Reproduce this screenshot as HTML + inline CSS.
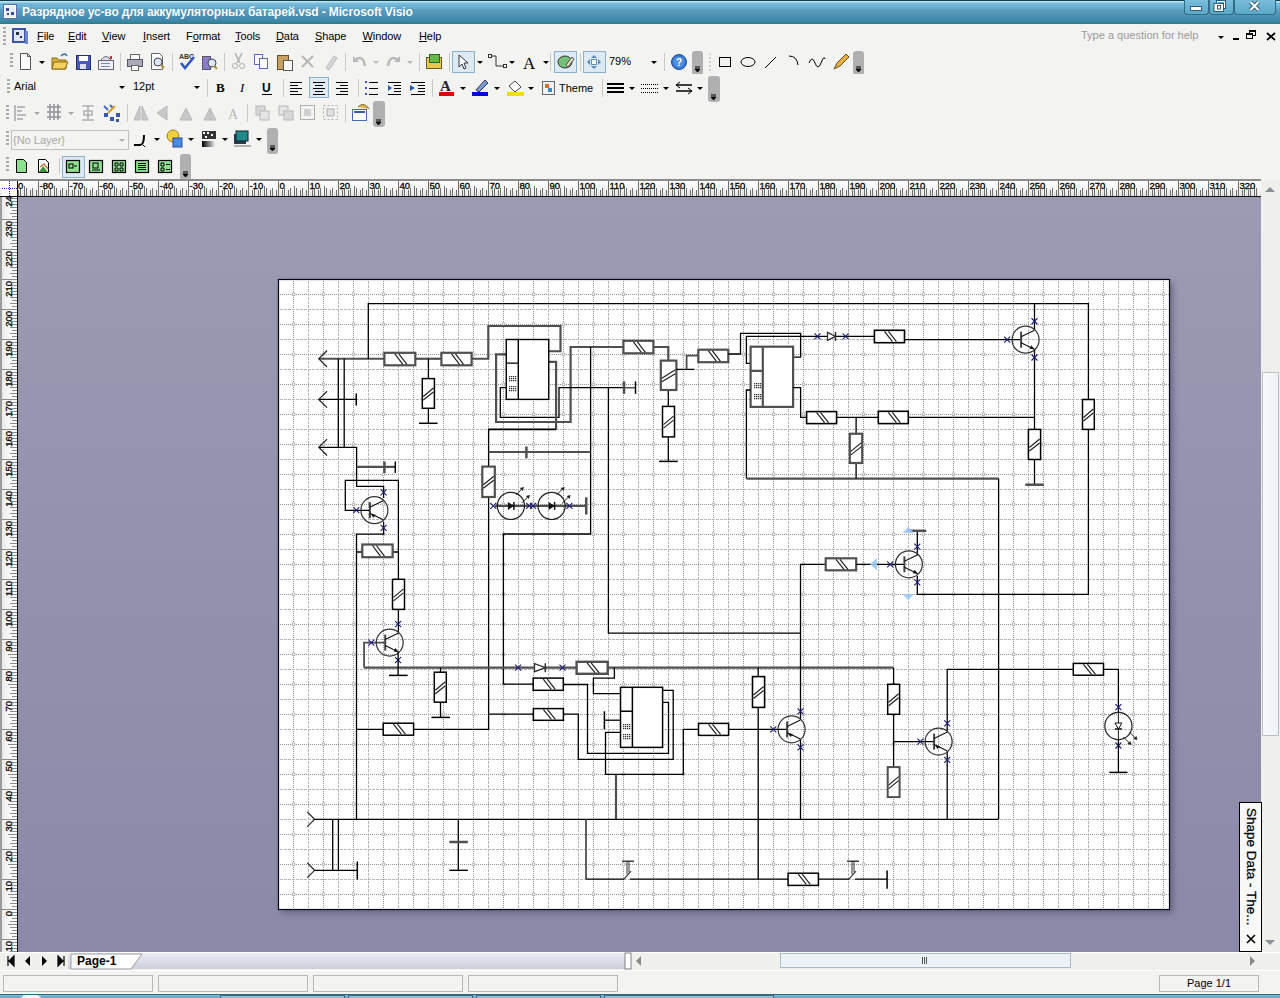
<!DOCTYPE html>
<html><head><meta charset="utf-8">
<style>
*{box-sizing:border-box}
html,body{margin:0;padding:0;width:1280px;height:998px;overflow:hidden;background:#f3f3f1;font-family:"Liberation Sans",sans-serif;}
.a{position:absolute}
#title{left:0;top:0;width:1280px;height:24px;background:linear-gradient(#123c46 0,#123c46 1px,#b4e6f6 1px,#b4e6f6 2px,#80bcd6 3px,#6cb6da 5px,#66acd0 8px,#5a9cbc 10px,#5296b6 14px,#4a8eb4 17px,#4288b0 20px,#348898 22px,#2f7888 24px);}
#title .t{left:22px;top:5px;color:#fff;font-weight:bold;font-size:12px;white-space:nowrap;letter-spacing:-0.13px;text-shadow:0 0 1px #3a7a95}
.wbtn{top:0;height:15px;border:1px solid #2f6c86;border-top:none;border-radius:0 0 4px 4px;background:linear-gradient(#79bedb,#5aa8c8)}
#menubar{left:0;top:24px;width:1280px;height:24px;background:#f3f3f1}
.mi{top:5.5px;font-size:11px;letter-spacing:-0.1px;color:#000;white-space:nowrap}
.mi u{text-decoration:underline}
.grip{width:3px;background:repeating-linear-gradient(#a9a9a9 0,#a9a9a9 2px,transparent 2px,transparent 4px)}
.sep{width:1px;height:18px;background:#c5c5c5}
.dd{width:0;height:0;border-left:3px solid transparent;border-right:3px solid transparent;border-top:3px solid #000}
.hnd{width:12px;border-radius:3px;background:linear-gradient(90deg,#c8c8c8,#a8a8a8)}
.hnd:after{content:"";position:absolute;left:3px;bottom:5px;width:6px;height:4px;border-top:1px solid #000;background:linear-gradient(#000 0,#000 0) no-repeat}
.sel{border:1px solid #8cb2cc;background:#dde9f3}
#ruler{left:0;top:179px;width:1261px;height:18px;background:linear-gradient(#fff,#f2f2f2 60%,#e4e4e4);border-top:2px solid #8a8a8a;border-bottom:1px solid #111}
#lruler{left:0;top:197px;width:18px;height:755px;background:linear-gradient(90deg,#e8e8e8,#fafafa);border-left:2px solid #9a9a9a;border-right:1px solid #111}
#canvas{left:18px;top:197px;width:1243px;height:755px;background:linear-gradient(#9b9bb3,#8a89a8)}
#vscroll{left:1261px;top:180px;width:19px;height:772px;background:#efefec}
#tabbar{left:0;top:952px;width:1280px;height:18px;background:#f0f0ee}
#status{left:0;top:970px;width:1280px;height:28px;background:#f3f3f1}
.sbox{top:5px;height:17px;border:1px solid #b9b9b5;background:#f3f3f1}
</style></head><body>
<div id="title" class="a">
 <svg class="a" style="left:3px;top:4px" width="15" height="15" viewBox="0 0 15 15"><rect x="0.5" y="0.5" width="13" height="14" fill="#fff" stroke="#5a6fb0"/><rect x="2" y="2" width="10" height="11" fill="#e8ecf8"/><rect x="3" y="4" width="3" height="3" fill="#3a4f98"/><rect x="8" y="8" width="3" height="3" fill="#3a4f98"/><rect x="4" y="9" width="2" height="2" fill="#3a4f98"/></svg>
 <div class="a t">Разрядное ус-во для аккумуляторных батарей.vsd - Microsoft Visio</div>
 <div class="a wbtn" style="left:1184px;width:25px"></div>
 <div class="a wbtn" style="left:1209px;width:25px"></div>
 <div class="a wbtn" style="left:1234px;width:42px"></div>
 <svg class="a" style="left:1184px;top:0" width="96" height="16" viewBox="1184 0 96 16">
  <rect x="1190.5" y="6.5" width="11" height="4" fill="#fff" stroke="#2f5a70"/>
  <rect x="1216.5" y="0.5" width="9" height="8" fill="#fff" stroke="#2f5a70"/><rect x="1218" y="2" width="6" height="5" fill="#5aa6c6"/>
  <rect x="1214" y="3.5" width="9.5" height="8" fill="#fff" stroke="#2f5a70"/><rect x="1217.5" y="5.5" width="3" height="3.5" fill="#fff" stroke="#2f5a70"/>
  <path d="M1250.5 2L1258.5 10M1258.5 2L1250.5 10" stroke="#2f5a70" stroke-width="4"/>
  <path d="M1250.5 2L1258.5 10M1258.5 2L1250.5 10" stroke="#fff" stroke-width="2.2"/>
 </svg>
</div>
<div id="menubar" class="a">
 <div class="a grip" style="left:3px;top:3px;height:18px"></div>
 <svg class="a" style="left:11px;top:3px" width="18" height="18" viewBox="0 0 18 18"><rect x="1" y="1" width="14" height="15" fill="#3a56a8"/><rect x="3" y="3" width="10" height="11" fill="#dfe6f6"/><rect x="5" y="5" width="3" height="3" fill="#234"/><rect x="9" y="9" width="2" height="2" fill="#234"/><rect x="14" y="4" width="3" height="13" fill="#6f86c8"/></svg>
 <div class="a mi" style="left:37px"><u>F</u>ile</div>
 <div class="a mi" style="left:68px"><u>E</u>dit</div>
 <div class="a mi" style="left:102px"><u>V</u>iew</div>
 <div class="a mi" style="left:143px"><u>I</u>nsert</div>
 <div class="a mi" style="left:186px">F<u>o</u>rmat</div>
 <div class="a mi" style="left:235px"><u>T</u>ools</div>
 <div class="a mi" style="left:276px"><u>D</u>ata</div>
 <div class="a mi" style="left:315px"><u>S</u>hape</div>
 <div class="a mi" style="left:362.5px"><u>W</u>indow</div>
 <div class="a mi" style="left:419px"><u>H</u>elp</div>
 <div class="a" style="left:1081px;top:5px;font-size:11px;color:#9a9a9a;white-space:nowrap">Type a question for help</div>
 <div class="a dd" style="left:1218px;top:12px"></div>
 <div class="a" style="left:1233px;top:14px;width:6px;height:2px;background:#000"></div>
 <div class="a" style="left:1249px;top:6px;width:7px;height:6px;border:1px solid #000;border-top-width:2px"></div>
 <div class="a" style="left:1246px;top:9px;width:7px;height:6px;border:1px solid #000;border-top-width:2px;background:#f3f3f1"></div>
 <svg class="a" style="left:1266px;top:8px" width="10" height="9" viewBox="0 0 10 9"><path d="M1 1L9 8M9 1L1 8" stroke="#000" stroke-width="1.8"/></svg>
</div>
<!-- toolbar row1 -->
<div class="a grip" style="left:10px;top:53px;height:16px"></div>
<svg class="a" style="left:0;top:50px" width="870" height="24" viewBox="0 0 870 24">
 <!-- new -->
 <path d="M20.5 3.5h7l3 3v13h-10z" fill="#fff" stroke="#555"/><path d="M27.5 3.5v3h3" fill="none" stroke="#555"/>
 <path d="M39 11h6l-3 3z" fill="#000"/>
 <!-- open -->
 <path d="M52 8h5l1 2h8v9H52z" fill="#d8b040" stroke="#8a6a10"/><path d="M54 12h14l-3 7H52z" fill="#f4d060" stroke="#8a6a10"/><path d="M61 6q4-4 6 0" fill="none" stroke="#3a6ab0" stroke-width="1.5"/>
 <!-- save -->
 <rect x="76.5" y="5.5" width="14" height="14" fill="#4a5ab8" stroke="#23306a"/><rect x="79" y="6" width="9" height="5" fill="#fff"/><rect x="80" y="14" width="6" height="5" fill="#dde"/>
 <!-- mail -->
 <rect x="98.5" y="10.5" width="15" height="9" fill="#eef" stroke="#667"/><path d="M101 10 q5-7 10 0" fill="#dde" stroke="#667"/><rect x="101" y="13" width="9" height="1" fill="#7a8ab8"/><rect x="101" y="16" width="9" height="1" fill="#7a8ab8"/><rect x="110" y="6" width="2" height="3" fill="#c33"/>
 <rect x="120" y="3" width="1" height="18" fill="#c8c8c8"/>
 <!-- print -->
 <rect x="130.5" y="4.5" width="9" height="5" fill="#fff" stroke="#666"/><rect x="127.5" y="9.5" width="15" height="7" fill="#aab" stroke="#556"/><rect x="131.5" y="15.5" width="7" height="5" fill="#fff" stroke="#666"/>
 <!-- preview -->
 <path d="M151.5 3.5h8l3 3v13h-11z" fill="#fff" stroke="#666"/><circle cx="158" cy="12" r="4" fill="#dde8f0" stroke="#445"/><path d="M161 15l3 3" stroke="#a8902a" stroke-width="2"/>
 <rect x="172" y="3" width="1" height="18" fill="#c8c8c8"/>
 <!-- spelling -->
 <text x="179" y="9" font-size="7" font-weight="bold" fill="#333" font-family="Liberation Sans">ABC</text><path d="M181 13l4 5 9-11" fill="none" stroke="#2a56c0" stroke-width="2.5"/>
 <!-- research -->
 <rect x="202.5" y="6.5" width="8" height="13" fill="#8a7ac8" stroke="#556"/><circle cx="212" cy="13" r="4" fill="#dde8f0" stroke="#445"/><path d="M214 16l3 3" stroke="#a8902a" stroke-width="2"/>
 <rect x="224" y="3" width="1" height="18" fill="#c8c8c8"/>
 <!-- cut gray -->
 <path d="M235 3l5 10M242 3l-5 10" stroke="#b0b0b0" stroke-width="1.5"/><circle cx="235" cy="16" r="2.5" fill="none" stroke="#b0b0b0"/><circle cx="242" cy="16" r="2.5" fill="none" stroke="#b0b0b0"/>
 <!-- copy -->
 <rect x="254.5" y="4.5" width="8" height="10" fill="#fff" stroke="#5a6ab0"/><rect x="259.5" y="8.5" width="8" height="10" fill="#fff" stroke="#5a6ab0"/>
 <!-- paste -->
 <rect x="277.5" y="5.5" width="11" height="14" fill="#c8a060" stroke="#6a5020"/><rect x="283.5" y="10.5" width="9" height="10" fill="#fff" stroke="#555"/>
 <!-- delete gray -->
 <path d="M302 6l11 11M313 6l-11 11" stroke="#b8b8b8" stroke-width="2"/>
 <!-- painter gray -->
 <path d="M326 18l8-12 3 2-8 12z" fill="#d8d8d8" stroke="#b8b8b8"/>
 <rect x="345" y="3" width="1" height="18" fill="#c8c8c8"/>
 <!-- undo redo gray -->
 <path d="M355 10q8-6 10 6" fill="none" stroke="#b8b8b8" stroke-width="2.5"/><path d="M353 6v6h6z" fill="#b8b8b8"/>
 <path d="M373 11h6l-3 3z" fill="#b8b8b8"/>
 <path d="M398 10q-8-6-10 6" fill="none" stroke="#b8b8b8" stroke-width="2.5"/><path d="M400 6v6h-6z" fill="#b8b8b8"/>
 <path d="M407 11h6l-3 3z" fill="#b8b8b8"/>
 <rect x="419" y="3" width="1" height="18" fill="#c8c8c8"/>
 <!-- stencil -->
 <rect x="426.5" y="7.5" width="15" height="11" fill="#e8c850" stroke="#6a5a20"/><rect x="429.5" y="4.5" width="10" height="8" fill="#68b848" stroke="#2a6a20"/>
 <rect x="449" y="3" width="1" height="18" fill="#c8c8c8"/>
 <!-- pointer selected -->
 <rect x="452.5" y="1.5" width="22" height="21" fill="#dde9f3" stroke="#8cb2cc"/>
 <path d="M459 5v12l3-3 2 5 2-1-2-5h4z" fill="#fff" stroke="#333"/>
 <path d="M477 11h6l-3 3z" fill="#000"/>
 <!-- connector -->
 <path d="M491 6h5v10h7" fill="none" stroke="#333"/><rect x="488.5" y="4.5" width="3" height="3" fill="#fff" stroke="#333"/><rect x="503.5" y="14.5" width="3" height="3" fill="#fff" stroke="#333"/>
 <path d="M509 11h6l-3 3z" fill="#000"/>
 <!-- text A -->
 <text x="523" y="19" font-size="17" font-family="Liberation Serif" fill="#000">A</text>
 <path d="M543 11h6l-3 3z" fill="#000"/>
 <rect x="550" y="3" width="1" height="18" fill="#c8c8c8"/>
 <!-- shapes selected -->
 <rect x="554.5" y="1.5" width="22" height="21" fill="#dde9f3" stroke="#8cb2cc"/>
 <ellipse cx="565" cy="12" rx="7" ry="6" fill="#78c078" stroke="#333"/><path d="M566 15l6-8 2 2-6 8z" fill="#e8e0c0" stroke="#555"/>
 <rect x="580" y="3" width="1" height="18" fill="#c8c8c8"/>
 <!-- pan zoom selected -->
 <rect x="583.5" y="1.5" width="22" height="21" fill="#dde9f3" stroke="#8cb2cc"/>
 <path d="M594 5l3 3h-6zM594 19l3-3h-6zM587 12l3-3v6zM601 12l-3-3v6z" fill="#5a8ac8"/><rect x="591.5" y="9.5" width="5" height="5" fill="#fff" stroke="#5a8ac8"/>
 <text x="609" y="15" font-size="11" font-family="Liberation Sans" fill="#000">79%</text>
 <path d="M651 11h6l-3 3z" fill="#000"/>
 <rect x="664" y="3" width="1" height="18" fill="#c8c8c8"/>
 <circle cx="679" cy="12" r="7.5" fill="#3a78d0" stroke="#1a4a98"/><circle cx="679" cy="12" r="5.5" fill="#4a90e0"/><text x="676" y="16" font-size="10" font-weight="bold" fill="#fff" font-family="Liberation Sans">?</text>
 <rect x="692" y="1" width="11" height="24" rx="3" fill="#b0b0b0"/><path d="M695 17h5M695 19h5l-2.5 3z" stroke="#000" fill="#000" stroke-width="1"/>
 <path d="M710 3v18" stroke="#b0b0b0" stroke-dasharray="2 2"/>
 <rect x="719.5" y="7.5" width="11" height="9" fill="none" stroke="#000"/>
 <ellipse cx="748" cy="12" rx="7" ry="4.5" fill="none" stroke="#000"/>
 <path d="M765 18l11-11" stroke="#000"/>
 <path d="M789 6q8 0 9 9" fill="none" stroke="#000"/>
 <path d="M809 13q3-8 6 0t6 0 4-4" fill="none" stroke="#000"/>
 <path d="M834 19l3-6 9-9 3 3-9 9z" fill="#e8b040" stroke="#6a4a10"/>
 <rect x="853" y="1" width="11" height="24" rx="3" fill="#b0b0b0"/><path d="M856 17h5M856 19h5l-2.5 3z" stroke="#000" fill="#000" stroke-width="1"/>
</svg>
<!-- toolbar row2 -->
<div class="a grip" style="left:7px;top:79px;height:16px"></div>
<div class="a" style="left:14px;top:80px;font-size:11px">Arial</div>
<svg class="a" style="left:0;top:76px" width="730" height="26" viewBox="0 0 730 26">
 <path d="M119 10h6l-3 3z" fill="#000"/>
 <path d="M194 10h6l-3 3z" fill="#000"/>
 <rect x="207" y="3" width="1" height="18" fill="#c8c8c8"/>
 <text x="216" y="16" font-size="13" font-weight="bold" font-family="Liberation Serif">B</text>
 <text x="240" y="16" font-size="13" font-style="italic" font-family="Liberation Serif">I</text>
 <text x="262" y="16" font-size="12" font-weight="bold" font-family="Liberation Sans">U</text><rect x="262" y="18" width="10" height="1" fill="#000"/>
 <rect x="283" y="3" width="1" height="18" fill="#c8c8c8"/>
 <path d="M290 6.5h12M290 9.5h8M290 12.5h12M290 15.5h8M290 18.5h12" stroke="#000"/>
 <rect x="309.5" y="1.5" width="19" height="20" fill="#dde9f3" stroke="#8cb2cc"/>
 <path d="M313 6.5h12M315 9.5h8M313 12.5h12M315 15.5h8M313 18.5h12" stroke="#000"/>
 <path d="M336 6.5h12M340 9.5h8M336 12.5h12M340 15.5h8M336 18.5h12" stroke="#000"/>
 <rect x="358" y="3" width="1" height="18" fill="#c8c8c8"/>
 <path d="M369 6.5h9M369 12.5h9M369 18.5h9" stroke="#000"/><path d="M365 6h2M365 12h2M365 18h2" stroke="#3a5ab0" stroke-width="2"/>
 <path d="M388 6.5h13M394 9.5h7M394 12.5h7M394 15.5h7M388 18.5h13" stroke="#000"/><path d="M392 12l-4-3v6z" fill="#2a5ab8"/>
 <path d="M411 6.5h14M418 9.5h7M418 12.5h7M418 15.5h7M411 18.5h14" stroke="#000"/><path d="M410 9l5 3-5 3z" fill="#2a5ab8"/>
 <rect x="432" y="3" width="1" height="18" fill="#c8c8c8"/>
 <text x="440" y="15" font-size="15" font-weight="bold" font-family="Liberation Serif" fill="#223">A</text><rect x="439" y="16" width="15" height="4" fill="#e00000"/>
 <path d="M460 11h6l-3 3z" fill="#000"/>
 <path d="M476 14l9-10 3 3-9 9z" fill="#7a9ad8" stroke="#334"/><rect x="472" y="16" width="16" height="4" fill="#0000e0"/>
 <path d="M494 11h6l-3 3z" fill="#000"/>
 <path d="M509 10l6-5 6 6-6 5z" fill="#fff" stroke="#444"/><rect x="507" y="16" width="17" height="4" fill="#f0e000"/>
 <path d="M528 11h6l-3 3z" fill="#000"/>
 <rect x="542.5" y="5.5" width="12" height="13" fill="#f4f4f8" stroke="#667"/><rect x="545" y="8" width="4" height="4" fill="#e86a20"/><rect x="548" y="12" width="4" height="4" fill="#3a8ad0"/>
 <text x="559" y="16" font-size="11" font-family="Liberation Sans">Theme</text>
 <rect x="602" y="3" width="1" height="18" fill="#c8c8c8"/>
 <path d="M607 8h17M607 12h17M607 16h17" stroke="#000" stroke-width="2"/>
 <path d="M629 11h6l-3 3z" fill="#000"/>
 <path d="M641 8.5h17M641 12.5h17M641 16.5h17" stroke="#000" stroke-dasharray="1 1"/>
 <path d="M663 11h6l-3 3z" fill="#000"/>
 <path d="M676 9h16M676 15h16" stroke="#000" stroke-width="1.5"/><path d="M680 6l-4 3 4 3M688 12l4 3-4 3" fill="none" stroke="#000"/>
 <path d="M697 11h6l-3 3z" fill="#000"/>
 <rect x="708" y="0" width="12" height="26" rx="3" fill="#b0b0b0"/><path d="M711 19h5M711 21h5l-2.5 3z" stroke="#000" fill="#000" stroke-width="1"/>
</svg>
<div class="a" style="left:133px;top:80px;font-size:11px">12pt</div>
<!-- toolbar row3 -->
<div class="a grip" style="left:6px;top:105px;height:16px"></div>
<svg class="a" style="left:0;top:101px" width="400" height="78" viewBox="0 0 400 78">
 <!-- row3 (y offset 0, center 12) -->
 <path d="M15 4v16M17 6h8M17 10h5M17 14h9M17 18h6" stroke="#a8a8a8" stroke-width="1.5"/>
 <path d="M34 11h6l-3 3z" fill="#a8a8a8"/>
 <path d="M47 6h14M47 11h14M47 16h14M50 3v16M54 3v16M58 3v16" stroke="#909098" stroke-width="1.5"/>
 <path d="M68 11h6l-3 3z" fill="#a8a8a8"/>
 <path d="M82 5h12M82 19h12M88 5v14M84 10h8v4h-8z" fill="none" stroke="#b0b0b0" stroke-width="1.5"/>
 <path d="M104 5l4 4M110 4l3 3" stroke="#4a6ab8" stroke-width="2"/><path d="M108 12l7-7" stroke="#d8a020" stroke-width="2"/><rect x="104" y="12" width="4" height="4" fill="#3a56a8"/><rect x="110" y="16" width="4" height="4" fill="#3a56a8"/><rect x="116" y="12" width="4" height="4" fill="#3a56a8"/><rect x="116" y="18" width="3" height="3" fill="#3a56a8"/>
 <rect x="127" y="3" width="1" height="18" fill="#c8c8c8"/>
 <path d="M140 5v14h-6zM142 5v14h6z" fill="#c8c8c8" stroke="#b8b8b8"/>
 <path d="M157 12l10-7v14z" fill="#c8c8c8" stroke="#b8b8b8"/>
 <path d="M180 19l6-12 6 12z" fill="#c8c8c8" stroke="#b8b8b8"/>
 <path d="M204 19l6-12 6 12zM210 7v12" fill="#c8c8c8" stroke="#b8b8b8"/>
 <text x="228" y="18" font-size="14" font-family="Liberation Serif" fill="#b8b8b8">A</text>
 <rect x="247" y="3" width="1" height="18" fill="#c8c8c8"/>
 <rect x="256" y="5" width="9" height="9" fill="#d8d8d8" stroke="#b8b8b8"/><rect x="260" y="10" width="9" height="9" fill="#e4e4e4" stroke="#b8b8b8"/>
 <rect x="279" y="5" width="9" height="9" fill="#e4e4e4" stroke="#b8b8b8"/><rect x="284" y="10" width="9" height="9" fill="#d8d8d8" stroke="#b8b8b8"/>
 <rect x="300.5" y="4.5" width="14" height="14" fill="none" stroke="#b0b0b0"/><rect x="304" y="8" width="7" height="7" fill="#d0d0d0"/>
 <rect x="323.5" y="4.5" width="14" height="14" fill="none" stroke="#b0b0b0" stroke-dasharray="2 2"/><rect x="327" y="8" width="7" height="7" fill="#e0e0e0" stroke="#b0b0b0"/>
 <rect x="345" y="3" width="1" height="18" fill="#c8c8c8"/>
 <rect x="352.5" y="8.5" width="14" height="11" fill="#fff" stroke="#4a6ab0"/><rect x="354" y="10" width="11" height="2" fill="#3a5ab0"/><path d="M358 6q6-6 11 2" fill="#e8b040" stroke="#8a6a10"/>
 <rect x="373" y="0" width="12" height="26" rx="3" fill="#b0b0b0"/><path d="M376 19h5M376 21h5l-2.5 3z" stroke="#000" fill="#000" stroke-width="1"/>
 <!-- row4 (y offset 26) -->
 <rect x="11.5" y="29.5" width="117" height="19" fill="#f4f4f2" stroke="#c0c0bc"/>
 <text x="13" y="43" font-size="11" font-family="Liberation Sans" fill="#a8a8a8">{No Layer}</text>
 <path d="M119 38h6l-3 3z" fill="#b0b0b0"/>
 <path d="M134 44h6q4 0 4-10" fill="none" stroke="#000" stroke-width="2"/><path d="M143 44l2 2" stroke="#000"/>
 <path d="M154 37h6l-3 3z" fill="#000"/>
 <circle cx="173" cy="35" r="6" fill="#f0d040" stroke="#a08020"/><rect x="173" y="37" width="9" height="9" fill="#4a8ae0" stroke="#2a4a98"/>
 <path d="M188 37h6l-3 3z" fill="#000"/>
 <rect x="202" y="30" width="14" height="8" fill="#333"/><path d="M203 31h2v2h-2zM207 31h2v2h-2zM211 33h2v2h-2zM205 35h2v2h-2z" fill="#fff"/><rect x="202" y="40" width="14" height="6" fill="url(#gr)"/>
 <defs><linearGradient id="gr"><stop offset="0" stop-color="#000"/><stop offset="1" stop-color="#fff"/></linearGradient></defs>
 <path d="M222 37h6l-3 3z" fill="#000"/>
 <rect x="234" y="33" width="12" height="10" fill="#2a3a4a"/><rect x="236" y="30" width="12" height="10" fill="#1f8a8a" stroke="#123"/><rect x="234" y="44" width="17" height="2" fill="#b0b0b0"/>
 <path d="M256 37h6l-3 3z" fill="#000"/>
 <rect x="267" y="27" width="11" height="26" rx="3" fill="#b0b0b0"/><path d="M270 45h5M270 47h5l-2.5 3z" stroke="#000" fill="#000" stroke-width="1"/>
 <g transform="translate(0,2)"><!-- row5 (y offset 52) -->
 <path d="M16.5 56.5h7l3 3v10h-10z" fill="#8ee08e" stroke="#000"/>
 <path d="M38.5 56.5h7l3 3v10h-10z" fill="#fff" stroke="#000"/><path d="M39 69l4-6 5 6z" fill="#3a9a3a"/><path d="M40 64l4-3 4 5" fill="none" stroke="#c87a30" stroke-width="1.5"/>
 <rect x="59" y="55" width="1" height="16" fill="#c8c8c8"/>
 <rect x="62.5" y="53.5" width="22" height="21" fill="#dde9f3" stroke="#8cb2cc"/>
 <rect x="66.5" y="57.5" width="13" height="12" fill="#8ee08e" stroke="#000" stroke-width="1.2"/><rect x="69" y="61" width="4" height="4" fill="none" stroke="#000"/><path d="M74 63h3" stroke="#000"/>
 <rect x="89.5" y="57.5" width="13" height="12" fill="#8ee08e" stroke="#000" stroke-width="1.2"/><rect x="93" y="60" width="5" height="5" fill="none" stroke="#000"/><path d="M92 67h8" stroke="#000"/>
 <rect x="112.5" y="57.5" width="13" height="12" fill="#8ee08e" stroke="#000" stroke-width="1.2"/><path d="M115 60h3v3h-3zM120 60h3v3h-3zM115 65h3v3h-3zM120 65h3v3h-3z" fill="none" stroke="#000"/>
 <rect x="135.5" y="57.5" width="13" height="12" fill="#8ee08e" stroke="#000" stroke-width="1.2"/><path d="M138 60.5h8M138 62.5h8M138 64.5h8M138 66.5h8" stroke="#000"/>
 <rect x="158.5" y="57.5" width="13" height="12" fill="#8ee08e" stroke="#000" stroke-width="1.2"/><path d="M161 60h3v3h-3zM161 65h3v3h-3zM166 61.5h4M166 66.5h4" fill="none" stroke="#000"/>
 </g><rect x="180" y="53" width="11" height="26" rx="3" fill="#b0b0b0"/><path d="M183 71h5M183 73h5l-2.5 3z" stroke="#000" fill="#000" stroke-width="1"/>
</svg>
<div class="a grip" style="left:6px;top:131px;height:16px"></div>
<div class="a grip" style="left:6px;top:157px;height:16px"></div>
<div id="canvas" class="a"></div>
<svg class="a" style="left:0;top:179px" width="1261" height="18" viewBox="0 179 1261 18">
<defs><linearGradient id="rg" x1="0" y1="0" x2="0" y2="1"><stop offset="0" stop-color="#ffffff"/><stop offset="0.6" stop-color="#f4f4f4"/><stop offset="1" stop-color="#e2e2e2"/></linearGradient></defs>
<rect x="0" y="179" width="1261" height="18" fill="url(#rg)"/>
<rect x="0" y="179" width="1261" height="2" fill="#8c8c8c"/>
<rect x="0" y="196" width="1261" height="1" fill="#101010"/>
<path d="M2.5 188V196M6.5 190V196M8.5 181V196M12.5 190V196M14.5 188V196M18.5 190V196M20.5 188V196M24.5 186V196M26.5 188V196M30.5 190V196M32.5 188V196M36.5 190V196M38.5 181V196M42.5 190V196M44.5 188V196M48.5 190V196M50.5 188V196M54.5 186V196M56.5 188V196M60.5 190V196M62.5 188V196M66.5 190V196M68.5 181V196M72.5 190V196M74.5 188V196M78.5 190V196M80.5 188V196M84.5 186V196M86.5 188V196M90.5 190V196M92.5 188V196M96.5 190V196M98.5 181V196M102.5 190V196M104.5 188V196M108.5 190V196M110.5 188V196M114.5 186V196M116.5 188V196M120.5 190V196M122.5 188V196M126.5 190V196M128.5 181V196M132.5 190V196M134.5 188V196M138.5 190V196M140.5 188V196M144.5 186V196M146.5 188V196M150.5 190V196M152.5 188V196M156.5 190V196M158.5 181V196M162.5 190V196M164.5 188V196M168.5 190V196M170.5 188V196M174.5 186V196M176.5 188V196M180.5 190V196M182.5 188V196M186.5 190V196M188.5 181V196M192.5 190V196M194.5 188V196M198.5 190V196M200.5 188V196M204.5 186V196M206.5 188V196M210.5 190V196M212.5 188V196M216.5 190V196M218.5 181V196M222.5 190V196M224.5 188V196M228.5 190V196M230.5 188V196M234.5 186V196M236.5 188V196M240.5 190V196M242.5 188V196M246.5 190V196M248.5 181V196M252.5 190V196M254.5 188V196M258.5 190V196M260.5 188V196M264.5 186V196M266.5 188V196M270.5 190V196M272.5 188V196M276.5 190V196M278.5 181V196M282.5 190V196M284.5 188V196M288.5 190V196M290.5 188V196M294.5 186V196M296.5 188V196M300.5 190V196M302.5 188V196M306.5 190V196M308.5 181V196M312.5 190V196M314.5 188V196M318.5 190V196M320.5 188V196M324.5 186V196M326.5 188V196M330.5 190V196M332.5 188V196M336.5 190V196M338.5 181V196M342.5 190V196M344.5 188V196M348.5 190V196M350.5 188V196M354.5 186V196M356.5 188V196M360.5 190V196M362.5 188V196M366.5 190V196M368.5 181V196M372.5 190V196M374.5 188V196M378.5 190V196M380.5 188V196M384.5 186V196M386.5 188V196M390.5 190V196M392.5 188V196M396.5 190V196M398.5 181V196M402.5 190V196M404.5 188V196M408.5 190V196M410.5 188V196M414.5 186V196M416.5 188V196M420.5 190V196M422.5 188V196M426.5 190V196M428.5 181V196M432.5 190V196M434.5 188V196M438.5 190V196M440.5 188V196M444.5 186V196M446.5 188V196M450.5 190V196M452.5 188V196M456.5 190V196M458.5 181V196M462.5 190V196M464.5 188V196M468.5 190V196M470.5 188V196M474.5 186V196M476.5 188V196M480.5 190V196M482.5 188V196M486.5 190V196M488.5 181V196M492.5 190V196M494.5 188V196M498.5 190V196M500.5 188V196M504.5 186V196M506.5 188V196M510.5 190V196M512.5 188V196M516.5 190V196M518.5 181V196M522.5 190V196M524.5 188V196M528.5 190V196M530.5 188V196M534.5 186V196M536.5 188V196M540.5 190V196M542.5 188V196M546.5 190V196M548.5 181V196M552.5 190V196M554.5 188V196M558.5 190V196M560.5 188V196M564.5 186V196M566.5 188V196M570.5 190V196M572.5 188V196M576.5 190V196M578.5 181V196M582.5 190V196M584.5 188V196M588.5 190V196M590.5 188V196M594.5 186V196M596.5 188V196M600.5 190V196M602.5 188V196M606.5 190V196M608.5 181V196M612.5 190V196M614.5 188V196M618.5 190V196M620.5 188V196M624.5 186V196M626.5 188V196M630.5 190V196M632.5 188V196M636.5 190V196M638.5 181V196M642.5 190V196M644.5 188V196M648.5 190V196M650.5 188V196M654.5 186V196M656.5 188V196M660.5 190V196M662.5 188V196M666.5 190V196M668.5 181V196M672.5 190V196M674.5 188V196M678.5 190V196M680.5 188V196M684.5 186V196M686.5 188V196M690.5 190V196M692.5 188V196M696.5 190V196M698.5 181V196M702.5 190V196M704.5 188V196M708.5 190V196M710.5 188V196M714.5 186V196M716.5 188V196M720.5 190V196M722.5 188V196M726.5 190V196M728.5 181V196M732.5 190V196M734.5 188V196M738.5 190V196M740.5 188V196M744.5 186V196M746.5 188V196M750.5 190V196M752.5 188V196M756.5 190V196M758.5 181V196M762.5 190V196M764.5 188V196M768.5 190V196M770.5 188V196M774.5 186V196M776.5 188V196M780.5 190V196M782.5 188V196M786.5 190V196M788.5 181V196M792.5 190V196M794.5 188V196M798.5 190V196M800.5 188V196M804.5 186V196M806.5 188V196M810.5 190V196M812.5 188V196M816.5 190V196M818.5 181V196M822.5 190V196M824.5 188V196M828.5 190V196M830.5 188V196M834.5 186V196M836.5 188V196M840.5 190V196M842.5 188V196M846.5 190V196M848.5 181V196M852.5 190V196M854.5 188V196M858.5 190V196M860.5 188V196M864.5 186V196M866.5 188V196M870.5 190V196M872.5 188V196M876.5 190V196M878.5 181V196M882.5 190V196M884.5 188V196M888.5 190V196M890.5 188V196M894.5 186V196M896.5 188V196M900.5 190V196M902.5 188V196M906.5 190V196M908.5 181V196M912.5 190V196M914.5 188V196M918.5 190V196M920.5 188V196M924.5 186V196M926.5 188V196M930.5 190V196M932.5 188V196M936.5 190V196M938.5 181V196M942.5 190V196M944.5 188V196M948.5 190V196M950.5 188V196M954.5 186V196M956.5 188V196M960.5 190V196M962.5 188V196M966.5 190V196M968.5 181V196M972.5 190V196M974.5 188V196M978.5 190V196M980.5 188V196M984.5 186V196M986.5 188V196M990.5 190V196M992.5 188V196M996.5 190V196M998.5 181V196M1002.5 190V196M1004.5 188V196M1008.5 190V196M1010.5 188V196M1014.5 186V196M1016.5 188V196M1020.5 190V196M1022.5 188V196M1026.5 190V196M1028.5 181V196M1032.5 190V196M1034.5 188V196M1038.5 190V196M1040.5 188V196M1044.5 186V196M1046.5 188V196M1050.5 190V196M1052.5 188V196M1056.5 190V196M1058.5 181V196M1062.5 190V196M1064.5 188V196M1068.5 190V196M1070.5 188V196M1074.5 186V196M1076.5 188V196M1080.5 190V196M1082.5 188V196M1086.5 190V196M1088.5 181V196M1092.5 190V196M1094.5 188V196M1098.5 190V196M1100.5 188V196M1104.5 186V196M1106.5 188V196M1110.5 190V196M1112.5 188V196M1116.5 190V196M1118.5 181V196M1122.5 190V196M1124.5 188V196M1128.5 190V196M1130.5 188V196M1134.5 186V196M1136.5 188V196M1140.5 190V196M1142.5 188V196M1146.5 190V196M1148.5 181V196M1152.5 190V196M1154.5 188V196M1158.5 190V196M1160.5 188V196M1164.5 186V196M1166.5 188V196M1170.5 190V196M1172.5 188V196M1176.5 190V196M1178.5 181V196M1182.5 190V196M1184.5 188V196M1188.5 190V196M1190.5 188V196M1194.5 186V196M1196.5 188V196M1200.5 190V196M1202.5 188V196M1206.5 190V196M1208.5 181V196M1212.5 190V196M1214.5 188V196M1218.5 190V196M1220.5 188V196M1224.5 186V196M1226.5 188V196M1230.5 190V196M1232.5 188V196M1236.5 190V196M1238.5 181V196M1242.5 190V196M1244.5 188V196M1248.5 190V196M1250.5 188V196M1254.5 186V196M1256.5 188V196" stroke="#6e6e6e" stroke-width="1"/>
<text x="9.5" y="189" font-size="9.5" stroke="#000" stroke-width="0.3" font-family="Liberation Sans">-90</text>
<text x="39.5" y="189" font-size="9.5" stroke="#000" stroke-width="0.3" font-family="Liberation Sans">-80</text>
<text x="69.5" y="189" font-size="9.5" stroke="#000" stroke-width="0.3" font-family="Liberation Sans">-70</text>
<text x="99.5" y="189" font-size="9.5" stroke="#000" stroke-width="0.3" font-family="Liberation Sans">-60</text>
<text x="129.5" y="189" font-size="9.5" stroke="#000" stroke-width="0.3" font-family="Liberation Sans">-50</text>
<text x="159.5" y="189" font-size="9.5" stroke="#000" stroke-width="0.3" font-family="Liberation Sans">-40</text>
<text x="189.5" y="189" font-size="9.5" stroke="#000" stroke-width="0.3" font-family="Liberation Sans">-30</text>
<text x="219.5" y="189" font-size="9.5" stroke="#000" stroke-width="0.3" font-family="Liberation Sans">-20</text>
<text x="249.5" y="189" font-size="9.5" stroke="#000" stroke-width="0.3" font-family="Liberation Sans">-10</text>
<text x="279.5" y="189" font-size="9.5" stroke="#000" stroke-width="0.3" font-family="Liberation Sans">0</text>
<text x="309.5" y="189" font-size="9.5" stroke="#000" stroke-width="0.3" font-family="Liberation Sans">10</text>
<text x="339.5" y="189" font-size="9.5" stroke="#000" stroke-width="0.3" font-family="Liberation Sans">20</text>
<text x="369.5" y="189" font-size="9.5" stroke="#000" stroke-width="0.3" font-family="Liberation Sans">30</text>
<text x="399.5" y="189" font-size="9.5" stroke="#000" stroke-width="0.3" font-family="Liberation Sans">40</text>
<text x="429.5" y="189" font-size="9.5" stroke="#000" stroke-width="0.3" font-family="Liberation Sans">50</text>
<text x="459.5" y="189" font-size="9.5" stroke="#000" stroke-width="0.3" font-family="Liberation Sans">60</text>
<text x="489.5" y="189" font-size="9.5" stroke="#000" stroke-width="0.3" font-family="Liberation Sans">70</text>
<text x="519.5" y="189" font-size="9.5" stroke="#000" stroke-width="0.3" font-family="Liberation Sans">80</text>
<text x="549.5" y="189" font-size="9.5" stroke="#000" stroke-width="0.3" font-family="Liberation Sans">90</text>
<text x="579.5" y="189" font-size="9.5" stroke="#000" stroke-width="0.3" font-family="Liberation Sans">100</text>
<text x="609.5" y="189" font-size="9.5" stroke="#000" stroke-width="0.3" font-family="Liberation Sans">110</text>
<text x="639.5" y="189" font-size="9.5" stroke="#000" stroke-width="0.3" font-family="Liberation Sans">120</text>
<text x="669.5" y="189" font-size="9.5" stroke="#000" stroke-width="0.3" font-family="Liberation Sans">130</text>
<text x="699.5" y="189" font-size="9.5" stroke="#000" stroke-width="0.3" font-family="Liberation Sans">140</text>
<text x="729.5" y="189" font-size="9.5" stroke="#000" stroke-width="0.3" font-family="Liberation Sans">150</text>
<text x="759.5" y="189" font-size="9.5" stroke="#000" stroke-width="0.3" font-family="Liberation Sans">160</text>
<text x="789.5" y="189" font-size="9.5" stroke="#000" stroke-width="0.3" font-family="Liberation Sans">170</text>
<text x="819.5" y="189" font-size="9.5" stroke="#000" stroke-width="0.3" font-family="Liberation Sans">180</text>
<text x="849.5" y="189" font-size="9.5" stroke="#000" stroke-width="0.3" font-family="Liberation Sans">190</text>
<text x="879.5" y="189" font-size="9.5" stroke="#000" stroke-width="0.3" font-family="Liberation Sans">200</text>
<text x="909.5" y="189" font-size="9.5" stroke="#000" stroke-width="0.3" font-family="Liberation Sans">210</text>
<text x="939.5" y="189" font-size="9.5" stroke="#000" stroke-width="0.3" font-family="Liberation Sans">220</text>
<text x="969.5" y="189" font-size="9.5" stroke="#000" stroke-width="0.3" font-family="Liberation Sans">230</text>
<text x="999.5" y="189" font-size="9.5" stroke="#000" stroke-width="0.3" font-family="Liberation Sans">240</text>
<text x="1029.5" y="189" font-size="9.5" stroke="#000" stroke-width="0.3" font-family="Liberation Sans">250</text>
<text x="1059.5" y="189" font-size="9.5" stroke="#000" stroke-width="0.3" font-family="Liberation Sans">260</text>
<text x="1089.5" y="189" font-size="9.5" stroke="#000" stroke-width="0.3" font-family="Liberation Sans">270</text>
<text x="1119.5" y="189" font-size="9.5" stroke="#000" stroke-width="0.3" font-family="Liberation Sans">280</text>
<text x="1149.5" y="189" font-size="9.5" stroke="#000" stroke-width="0.3" font-family="Liberation Sans">290</text>
<text x="1179.5" y="189" font-size="9.5" stroke="#000" stroke-width="0.3" font-family="Liberation Sans">300</text>
<text x="1209.5" y="189" font-size="9.5" stroke="#000" stroke-width="0.3" font-family="Liberation Sans">310</text>
<text x="1239.5" y="189" font-size="9.5" stroke="#000" stroke-width="0.3" font-family="Liberation Sans">320</text>
<rect x="2" y="181" width="15" height="15" fill="#fff"/>
<path d="M9.5 181V196M2 188.5H17" stroke="#2020c0" stroke-dasharray="1 1"/>
<rect x="17" y="181" width="1" height="16" fill="#101010"/>
</svg><svg class="a" style="left:0;top:197px" width="18" height="755" viewBox="0 197 18 755">
<defs><linearGradient id="lg" x1="0" y1="0" x2="1" y2="0"><stop offset="0" stop-color="#e6e6e6"/><stop offset="0.5" stop-color="#f8f8f8"/><stop offset="1" stop-color="#fdfdfd"/></linearGradient></defs>
<rect x="0" y="197" width="18" height="755" fill="url(#lg)"/>
<rect x="0" y="197" width="2" height="755" fill="#9c9c9c"/>
<rect x="17" y="197" width="1" height="755" fill="#101010"/>
<path d="M10 951.5H17M12 948.5H17M10 945.5H17M12 942.5H17M2 939.5H17M12 936.5H17M10 933.5H17M12 930.5H17M10 927.5H17M8 924.5H17M10 921.5H17M12 918.5H17M10 915.5H17M12 912.5H17M2 909.5H17M12 906.5H17M10 903.5H17M12 900.5H17M10 897.5H17M8 894.5H17M10 891.5H17M12 888.5H17M10 885.5H17M12 882.5H17M2 879.5H17M12 876.5H17M10 873.5H17M12 870.5H17M10 867.5H17M8 864.5H17M10 861.5H17M12 858.5H17M10 855.5H17M12 852.5H17M2 849.5H17M12 846.5H17M10 843.5H17M12 840.5H17M10 837.5H17M8 834.5H17M10 831.5H17M12 828.5H17M10 825.5H17M12 822.5H17M2 819.5H17M12 816.5H17M10 813.5H17M12 810.5H17M10 807.5H17M8 804.5H17M10 801.5H17M12 798.5H17M10 795.5H17M12 792.5H17M2 789.5H17M12 786.5H17M10 783.5H17M12 780.5H17M10 777.5H17M8 774.5H17M10 771.5H17M12 768.5H17M10 765.5H17M12 762.5H17M2 759.5H17M12 756.5H17M10 753.5H17M12 750.5H17M10 747.5H17M8 744.5H17M10 741.5H17M12 738.5H17M10 735.5H17M12 732.5H17M2 729.5H17M12 726.5H17M10 723.5H17M12 720.5H17M10 717.5H17M8 714.5H17M10 711.5H17M12 708.5H17M10 705.5H17M12 702.5H17M2 699.5H17M12 696.5H17M10 693.5H17M12 690.5H17M10 687.5H17M8 684.5H17M10 681.5H17M12 678.5H17M10 675.5H17M12 672.5H17M2 669.5H17M12 666.5H17M10 663.5H17M12 660.5H17M10 657.5H17M8 654.5H17M10 651.5H17M12 648.5H17M10 645.5H17M12 642.5H17M2 639.5H17M12 636.5H17M10 633.5H17M12 630.5H17M10 627.5H17M8 624.5H17M10 621.5H17M12 618.5H17M10 615.5H17M12 612.5H17M2 609.5H17M12 606.5H17M10 603.5H17M12 600.5H17M10 597.5H17M8 594.5H17M10 591.5H17M12 588.5H17M10 585.5H17M12 582.5H17M2 579.5H17M12 576.5H17M10 573.5H17M12 570.5H17M10 567.5H17M8 564.5H17M10 561.5H17M12 558.5H17M10 555.5H17M12 552.5H17M2 549.5H17M12 546.5H17M10 543.5H17M12 540.5H17M10 537.5H17M8 534.5H17M10 531.5H17M12 528.5H17M10 525.5H17M12 522.5H17M2 519.5H17M12 516.5H17M10 513.5H17M12 510.5H17M10 507.5H17M8 504.5H17M10 501.5H17M12 498.5H17M10 495.5H17M12 492.5H17M2 489.5H17M12 486.5H17M10 483.5H17M12 480.5H17M10 477.5H17M8 474.5H17M10 471.5H17M12 468.5H17M10 465.5H17M12 462.5H17M2 459.5H17M12 456.5H17M10 453.5H17M12 450.5H17M10 447.5H17M8 444.5H17M10 441.5H17M12 438.5H17M10 435.5H17M12 432.5H17M2 429.5H17M12 426.5H17M10 423.5H17M12 420.5H17M10 417.5H17M8 414.5H17M10 411.5H17M12 408.5H17M10 405.5H17M12 402.5H17M2 399.5H17M12 396.5H17M10 393.5H17M12 390.5H17M10 387.5H17M8 384.5H17M10 381.5H17M12 378.5H17M10 375.5H17M12 372.5H17M2 369.5H17M12 366.5H17M10 363.5H17M12 360.5H17M10 357.5H17M8 354.5H17M10 351.5H17M12 348.5H17M10 345.5H17M12 342.5H17M2 339.5H17M12 336.5H17M10 333.5H17M12 330.5H17M10 327.5H17M8 324.5H17M10 321.5H17M12 318.5H17M10 315.5H17M12 312.5H17M2 309.5H17M12 306.5H17M10 303.5H17M12 300.5H17M10 297.5H17M8 294.5H17M10 291.5H17M12 288.5H17M10 285.5H17M12 282.5H17M2 279.5H17M12 276.5H17M10 273.5H17M12 270.5H17M10 267.5H17M8 264.5H17M10 261.5H17M12 258.5H17M10 255.5H17M12 252.5H17M2 249.5H17M12 246.5H17M10 243.5H17M12 240.5H17M10 237.5H17M8 234.5H17M10 231.5H17M12 228.5H17M10 225.5H17M12 222.5H17M2 219.5H17M12 216.5H17M10 213.5H17M12 210.5H17M10 207.5H17M8 204.5H17M10 201.5H17M12 198.5H17M10 195.5H17M12 192.5H17M2 189.5H17M12 186.5H17M10 183.5H17M12 180.5H17" stroke="#8a8a8a" stroke-width="1"/>
<text transform="translate(11.7,941) rotate(-90)" text-anchor="end" font-size="9.5" stroke="#000" stroke-width="0.3" font-family="Liberation Sans">-10</text>
<text transform="translate(11.7,911) rotate(-90)" text-anchor="end" font-size="9.5" stroke="#000" stroke-width="0.3" font-family="Liberation Sans">0</text>
<text transform="translate(11.7,881) rotate(-90)" text-anchor="end" font-size="9.5" stroke="#000" stroke-width="0.3" font-family="Liberation Sans">10</text>
<text transform="translate(11.7,851) rotate(-90)" text-anchor="end" font-size="9.5" stroke="#000" stroke-width="0.3" font-family="Liberation Sans">20</text>
<text transform="translate(11.7,821) rotate(-90)" text-anchor="end" font-size="9.5" stroke="#000" stroke-width="0.3" font-family="Liberation Sans">30</text>
<text transform="translate(11.7,791) rotate(-90)" text-anchor="end" font-size="9.5" stroke="#000" stroke-width="0.3" font-family="Liberation Sans">40</text>
<text transform="translate(11.7,761) rotate(-90)" text-anchor="end" font-size="9.5" stroke="#000" stroke-width="0.3" font-family="Liberation Sans">50</text>
<text transform="translate(11.7,731) rotate(-90)" text-anchor="end" font-size="9.5" stroke="#000" stroke-width="0.3" font-family="Liberation Sans">60</text>
<text transform="translate(11.7,701) rotate(-90)" text-anchor="end" font-size="9.5" stroke="#000" stroke-width="0.3" font-family="Liberation Sans">70</text>
<text transform="translate(11.7,671) rotate(-90)" text-anchor="end" font-size="9.5" stroke="#000" stroke-width="0.3" font-family="Liberation Sans">80</text>
<text transform="translate(11.7,641) rotate(-90)" text-anchor="end" font-size="9.5" stroke="#000" stroke-width="0.3" font-family="Liberation Sans">90</text>
<text transform="translate(11.7,611) rotate(-90)" text-anchor="end" font-size="9.5" stroke="#000" stroke-width="0.3" font-family="Liberation Sans">100</text>
<text transform="translate(11.7,581) rotate(-90)" text-anchor="end" font-size="9.5" stroke="#000" stroke-width="0.3" font-family="Liberation Sans">110</text>
<text transform="translate(11.7,551) rotate(-90)" text-anchor="end" font-size="9.5" stroke="#000" stroke-width="0.3" font-family="Liberation Sans">120</text>
<text transform="translate(11.7,521) rotate(-90)" text-anchor="end" font-size="9.5" stroke="#000" stroke-width="0.3" font-family="Liberation Sans">130</text>
<text transform="translate(11.7,491) rotate(-90)" text-anchor="end" font-size="9.5" stroke="#000" stroke-width="0.3" font-family="Liberation Sans">140</text>
<text transform="translate(11.7,461) rotate(-90)" text-anchor="end" font-size="9.5" stroke="#000" stroke-width="0.3" font-family="Liberation Sans">150</text>
<text transform="translate(11.7,431) rotate(-90)" text-anchor="end" font-size="9.5" stroke="#000" stroke-width="0.3" font-family="Liberation Sans">160</text>
<text transform="translate(11.7,401) rotate(-90)" text-anchor="end" font-size="9.5" stroke="#000" stroke-width="0.3" font-family="Liberation Sans">170</text>
<text transform="translate(11.7,371) rotate(-90)" text-anchor="end" font-size="9.5" stroke="#000" stroke-width="0.3" font-family="Liberation Sans">180</text>
<text transform="translate(11.7,341) rotate(-90)" text-anchor="end" font-size="9.5" stroke="#000" stroke-width="0.3" font-family="Liberation Sans">190</text>
<text transform="translate(11.7,311) rotate(-90)" text-anchor="end" font-size="9.5" stroke="#000" stroke-width="0.3" font-family="Liberation Sans">200</text>
<text transform="translate(11.7,281) rotate(-90)" text-anchor="end" font-size="9.5" stroke="#000" stroke-width="0.3" font-family="Liberation Sans">210</text>
<text transform="translate(11.7,251) rotate(-90)" text-anchor="end" font-size="9.5" stroke="#000" stroke-width="0.3" font-family="Liberation Sans">220</text>
<text transform="translate(11.7,221) rotate(-90)" text-anchor="end" font-size="9.5" stroke="#000" stroke-width="0.3" font-family="Liberation Sans">230</text>
<text transform="translate(11.7,191) rotate(-90)" text-anchor="end" font-size="9.5" stroke="#000" stroke-width="0.3" font-family="Liberation Sans">240</text>
</svg><svg class="a" style="left:18px;top:197px" width="1243" height="755" viewBox="18 197 1243 755">
<defs><filter id="sh" x="-5%" y="-5%" width="110%" height="110%"><feGaussianBlur stdDeviation="3"/></filter></defs>
<rect x="281" y="282" width="892" height="631" fill="#4a4a68" opacity="0.6" filter="url(#sh)"/>
<rect x="278.5" y="279.5" width="891" height="630" fill="#fff" stroke="#05051a" stroke-width="1.2"/>
<path d="M293.5 281V909M323.5 281V909M353.5 281V909M383.5 281V909M413.5 281V909M443.5 281V909M473.5 281V909M503.5 281V909M533.5 281V909M563.5 281V909M593.5 281V909M623.5 281V909M653.5 281V909M683.5 281V909M713.5 281V909M743.5 281V909M773.5 281V909M803.5 281V909M833.5 281V909M863.5 281V909M893.5 281V909M923.5 281V909M953.5 281V909M983.5 281V909M1013.5 281V909M1043.5 281V909M1073.5 281V909M1103.5 281V909M1133.5 281V909M1163.5 281V909M280 894.5H1169M280 864.5H1169M280 834.5H1169M280 804.5H1169M280 774.5H1169M280 744.5H1169M280 714.5H1169M280 684.5H1169M280 654.5H1169M280 624.5H1169M280 594.5H1169M280 564.5H1169M280 534.5H1169M280 504.5H1169M280 474.5H1169M280 444.5H1169M280 414.5H1169M280 384.5H1169M280 354.5H1169M280 324.5H1169M280 294.5H1169" stroke="#949494" stroke-width="1" stroke-dasharray="1 1" fill="none"/>
<path d="M308.5 281V909M338.5 281V909M368.5 281V909M398.5 281V909M428.5 281V909M458.5 281V909M488.5 281V909M518.5 281V909M548.5 281V909M578.5 281V909M608.5 281V909M638.5 281V909M668.5 281V909M698.5 281V909M728.5 281V909M758.5 281V909M788.5 281V909M818.5 281V909M848.5 281V909M878.5 281V909M908.5 281V909M938.5 281V909M968.5 281V909M998.5 281V909M1028.5 281V909M1058.5 281V909M1088.5 281V909M1118.5 281V909M1148.5 281V909M280 879.5H1169M280 849.5H1169M280 819.5H1169M280 789.5H1169M280 759.5H1169M280 729.5H1169M280 699.5H1169M280 669.5H1169M280 639.5H1169M280 609.5H1169M280 579.5H1169M280 549.5H1169M280 519.5H1169M280 489.5H1169M280 459.5H1169M280 429.5H1169M280 399.5H1169M280 369.5H1169M280 339.5H1169M280 309.5H1169" stroke="#b8b8b8" stroke-width="1" stroke-dasharray="3 1" fill="none"/>
<path d="M292.0 894.3a1.5 1.5 0 1 0 3 0a1.5 1.5 0 1 0-3 0M292.0 864.3a1.5 1.5 0 1 0 3 0a1.5 1.5 0 1 0-3 0M292.0 834.3a1.5 1.5 0 1 0 3 0a1.5 1.5 0 1 0-3 0M292.0 804.3a1.5 1.5 0 1 0 3 0a1.5 1.5 0 1 0-3 0M292.0 774.3a1.5 1.5 0 1 0 3 0a1.5 1.5 0 1 0-3 0M292.0 744.3a1.5 1.5 0 1 0 3 0a1.5 1.5 0 1 0-3 0M292.0 714.3a1.5 1.5 0 1 0 3 0a1.5 1.5 0 1 0-3 0M292.0 684.3a1.5 1.5 0 1 0 3 0a1.5 1.5 0 1 0-3 0M292.0 654.3a1.5 1.5 0 1 0 3 0a1.5 1.5 0 1 0-3 0M292.0 624.3a1.5 1.5 0 1 0 3 0a1.5 1.5 0 1 0-3 0M292.0 594.3a1.5 1.5 0 1 0 3 0a1.5 1.5 0 1 0-3 0M292.0 564.3a1.5 1.5 0 1 0 3 0a1.5 1.5 0 1 0-3 0M292.0 534.3a1.5 1.5 0 1 0 3 0a1.5 1.5 0 1 0-3 0M292.0 504.3a1.5 1.5 0 1 0 3 0a1.5 1.5 0 1 0-3 0M292.0 474.3a1.5 1.5 0 1 0 3 0a1.5 1.5 0 1 0-3 0M292.0 444.3a1.5 1.5 0 1 0 3 0a1.5 1.5 0 1 0-3 0M292.0 414.3a1.5 1.5 0 1 0 3 0a1.5 1.5 0 1 0-3 0M292.0 384.3a1.5 1.5 0 1 0 3 0a1.5 1.5 0 1 0-3 0M292.0 354.3a1.5 1.5 0 1 0 3 0a1.5 1.5 0 1 0-3 0M292.0 324.3a1.5 1.5 0 1 0 3 0a1.5 1.5 0 1 0-3 0M292.0 294.3a1.5 1.5 0 1 0 3 0a1.5 1.5 0 1 0-3 0M322.0 894.3a1.5 1.5 0 1 0 3 0a1.5 1.5 0 1 0-3 0M322.0 864.3a1.5 1.5 0 1 0 3 0a1.5 1.5 0 1 0-3 0M322.0 834.3a1.5 1.5 0 1 0 3 0a1.5 1.5 0 1 0-3 0M322.0 804.3a1.5 1.5 0 1 0 3 0a1.5 1.5 0 1 0-3 0M322.0 774.3a1.5 1.5 0 1 0 3 0a1.5 1.5 0 1 0-3 0M322.0 744.3a1.5 1.5 0 1 0 3 0a1.5 1.5 0 1 0-3 0M322.0 714.3a1.5 1.5 0 1 0 3 0a1.5 1.5 0 1 0-3 0M322.0 684.3a1.5 1.5 0 1 0 3 0a1.5 1.5 0 1 0-3 0M322.0 654.3a1.5 1.5 0 1 0 3 0a1.5 1.5 0 1 0-3 0M322.0 624.3a1.5 1.5 0 1 0 3 0a1.5 1.5 0 1 0-3 0M322.0 594.3a1.5 1.5 0 1 0 3 0a1.5 1.5 0 1 0-3 0M322.0 564.3a1.5 1.5 0 1 0 3 0a1.5 1.5 0 1 0-3 0M322.0 534.3a1.5 1.5 0 1 0 3 0a1.5 1.5 0 1 0-3 0M322.0 504.3a1.5 1.5 0 1 0 3 0a1.5 1.5 0 1 0-3 0M322.0 474.3a1.5 1.5 0 1 0 3 0a1.5 1.5 0 1 0-3 0M322.0 444.3a1.5 1.5 0 1 0 3 0a1.5 1.5 0 1 0-3 0M322.0 414.3a1.5 1.5 0 1 0 3 0a1.5 1.5 0 1 0-3 0M322.0 384.3a1.5 1.5 0 1 0 3 0a1.5 1.5 0 1 0-3 0M322.0 354.3a1.5 1.5 0 1 0 3 0a1.5 1.5 0 1 0-3 0M322.0 324.3a1.5 1.5 0 1 0 3 0a1.5 1.5 0 1 0-3 0M322.0 294.3a1.5 1.5 0 1 0 3 0a1.5 1.5 0 1 0-3 0M352.0 894.3a1.5 1.5 0 1 0 3 0a1.5 1.5 0 1 0-3 0M352.0 864.3a1.5 1.5 0 1 0 3 0a1.5 1.5 0 1 0-3 0M352.0 834.3a1.5 1.5 0 1 0 3 0a1.5 1.5 0 1 0-3 0M352.0 804.3a1.5 1.5 0 1 0 3 0a1.5 1.5 0 1 0-3 0M352.0 774.3a1.5 1.5 0 1 0 3 0a1.5 1.5 0 1 0-3 0M352.0 744.3a1.5 1.5 0 1 0 3 0a1.5 1.5 0 1 0-3 0M352.0 714.3a1.5 1.5 0 1 0 3 0a1.5 1.5 0 1 0-3 0M352.0 684.3a1.5 1.5 0 1 0 3 0a1.5 1.5 0 1 0-3 0M352.0 654.3a1.5 1.5 0 1 0 3 0a1.5 1.5 0 1 0-3 0M352.0 624.3a1.5 1.5 0 1 0 3 0a1.5 1.5 0 1 0-3 0M352.0 594.3a1.5 1.5 0 1 0 3 0a1.5 1.5 0 1 0-3 0M352.0 564.3a1.5 1.5 0 1 0 3 0a1.5 1.5 0 1 0-3 0M352.0 534.3a1.5 1.5 0 1 0 3 0a1.5 1.5 0 1 0-3 0M352.0 504.3a1.5 1.5 0 1 0 3 0a1.5 1.5 0 1 0-3 0M352.0 474.3a1.5 1.5 0 1 0 3 0a1.5 1.5 0 1 0-3 0M352.0 444.3a1.5 1.5 0 1 0 3 0a1.5 1.5 0 1 0-3 0M352.0 414.3a1.5 1.5 0 1 0 3 0a1.5 1.5 0 1 0-3 0M352.0 384.3a1.5 1.5 0 1 0 3 0a1.5 1.5 0 1 0-3 0M352.0 354.3a1.5 1.5 0 1 0 3 0a1.5 1.5 0 1 0-3 0M352.0 324.3a1.5 1.5 0 1 0 3 0a1.5 1.5 0 1 0-3 0M352.0 294.3a1.5 1.5 0 1 0 3 0a1.5 1.5 0 1 0-3 0M382.0 894.3a1.5 1.5 0 1 0 3 0a1.5 1.5 0 1 0-3 0M382.0 864.3a1.5 1.5 0 1 0 3 0a1.5 1.5 0 1 0-3 0M382.0 834.3a1.5 1.5 0 1 0 3 0a1.5 1.5 0 1 0-3 0M382.0 804.3a1.5 1.5 0 1 0 3 0a1.5 1.5 0 1 0-3 0M382.0 774.3a1.5 1.5 0 1 0 3 0a1.5 1.5 0 1 0-3 0M382.0 744.3a1.5 1.5 0 1 0 3 0a1.5 1.5 0 1 0-3 0M382.0 714.3a1.5 1.5 0 1 0 3 0a1.5 1.5 0 1 0-3 0M382.0 684.3a1.5 1.5 0 1 0 3 0a1.5 1.5 0 1 0-3 0M382.0 654.3a1.5 1.5 0 1 0 3 0a1.5 1.5 0 1 0-3 0M382.0 624.3a1.5 1.5 0 1 0 3 0a1.5 1.5 0 1 0-3 0M382.0 594.3a1.5 1.5 0 1 0 3 0a1.5 1.5 0 1 0-3 0M382.0 564.3a1.5 1.5 0 1 0 3 0a1.5 1.5 0 1 0-3 0M382.0 534.3a1.5 1.5 0 1 0 3 0a1.5 1.5 0 1 0-3 0M382.0 504.3a1.5 1.5 0 1 0 3 0a1.5 1.5 0 1 0-3 0M382.0 474.3a1.5 1.5 0 1 0 3 0a1.5 1.5 0 1 0-3 0M382.0 444.3a1.5 1.5 0 1 0 3 0a1.5 1.5 0 1 0-3 0M382.0 414.3a1.5 1.5 0 1 0 3 0a1.5 1.5 0 1 0-3 0M382.0 384.3a1.5 1.5 0 1 0 3 0a1.5 1.5 0 1 0-3 0M382.0 354.3a1.5 1.5 0 1 0 3 0a1.5 1.5 0 1 0-3 0M382.0 324.3a1.5 1.5 0 1 0 3 0a1.5 1.5 0 1 0-3 0M382.0 294.3a1.5 1.5 0 1 0 3 0a1.5 1.5 0 1 0-3 0M412.0 894.3a1.5 1.5 0 1 0 3 0a1.5 1.5 0 1 0-3 0M412.0 864.3a1.5 1.5 0 1 0 3 0a1.5 1.5 0 1 0-3 0M412.0 834.3a1.5 1.5 0 1 0 3 0a1.5 1.5 0 1 0-3 0M412.0 804.3a1.5 1.5 0 1 0 3 0a1.5 1.5 0 1 0-3 0M412.0 774.3a1.5 1.5 0 1 0 3 0a1.5 1.5 0 1 0-3 0M412.0 744.3a1.5 1.5 0 1 0 3 0a1.5 1.5 0 1 0-3 0M412.0 714.3a1.5 1.5 0 1 0 3 0a1.5 1.5 0 1 0-3 0M412.0 684.3a1.5 1.5 0 1 0 3 0a1.5 1.5 0 1 0-3 0M412.0 654.3a1.5 1.5 0 1 0 3 0a1.5 1.5 0 1 0-3 0M412.0 624.3a1.5 1.5 0 1 0 3 0a1.5 1.5 0 1 0-3 0M412.0 594.3a1.5 1.5 0 1 0 3 0a1.5 1.5 0 1 0-3 0M412.0 564.3a1.5 1.5 0 1 0 3 0a1.5 1.5 0 1 0-3 0M412.0 534.3a1.5 1.5 0 1 0 3 0a1.5 1.5 0 1 0-3 0M412.0 504.3a1.5 1.5 0 1 0 3 0a1.5 1.5 0 1 0-3 0M412.0 474.3a1.5 1.5 0 1 0 3 0a1.5 1.5 0 1 0-3 0M412.0 444.3a1.5 1.5 0 1 0 3 0a1.5 1.5 0 1 0-3 0M412.0 414.3a1.5 1.5 0 1 0 3 0a1.5 1.5 0 1 0-3 0M412.0 384.3a1.5 1.5 0 1 0 3 0a1.5 1.5 0 1 0-3 0M412.0 354.3a1.5 1.5 0 1 0 3 0a1.5 1.5 0 1 0-3 0M412.0 324.3a1.5 1.5 0 1 0 3 0a1.5 1.5 0 1 0-3 0M412.0 294.3a1.5 1.5 0 1 0 3 0a1.5 1.5 0 1 0-3 0M442.0 894.3a1.5 1.5 0 1 0 3 0a1.5 1.5 0 1 0-3 0M442.0 864.3a1.5 1.5 0 1 0 3 0a1.5 1.5 0 1 0-3 0M442.0 834.3a1.5 1.5 0 1 0 3 0a1.5 1.5 0 1 0-3 0M442.0 804.3a1.5 1.5 0 1 0 3 0a1.5 1.5 0 1 0-3 0M442.0 774.3a1.5 1.5 0 1 0 3 0a1.5 1.5 0 1 0-3 0M442.0 744.3a1.5 1.5 0 1 0 3 0a1.5 1.5 0 1 0-3 0M442.0 714.3a1.5 1.5 0 1 0 3 0a1.5 1.5 0 1 0-3 0M442.0 684.3a1.5 1.5 0 1 0 3 0a1.5 1.5 0 1 0-3 0M442.0 654.3a1.5 1.5 0 1 0 3 0a1.5 1.5 0 1 0-3 0M442.0 624.3a1.5 1.5 0 1 0 3 0a1.5 1.5 0 1 0-3 0M442.0 594.3a1.5 1.5 0 1 0 3 0a1.5 1.5 0 1 0-3 0M442.0 564.3a1.5 1.5 0 1 0 3 0a1.5 1.5 0 1 0-3 0M442.0 534.3a1.5 1.5 0 1 0 3 0a1.5 1.5 0 1 0-3 0M442.0 504.3a1.5 1.5 0 1 0 3 0a1.5 1.5 0 1 0-3 0M442.0 474.3a1.5 1.5 0 1 0 3 0a1.5 1.5 0 1 0-3 0M442.0 444.3a1.5 1.5 0 1 0 3 0a1.5 1.5 0 1 0-3 0M442.0 414.3a1.5 1.5 0 1 0 3 0a1.5 1.5 0 1 0-3 0M442.0 384.3a1.5 1.5 0 1 0 3 0a1.5 1.5 0 1 0-3 0M442.0 354.3a1.5 1.5 0 1 0 3 0a1.5 1.5 0 1 0-3 0M442.0 324.3a1.5 1.5 0 1 0 3 0a1.5 1.5 0 1 0-3 0M442.0 294.3a1.5 1.5 0 1 0 3 0a1.5 1.5 0 1 0-3 0M472.0 894.3a1.5 1.5 0 1 0 3 0a1.5 1.5 0 1 0-3 0M472.0 864.3a1.5 1.5 0 1 0 3 0a1.5 1.5 0 1 0-3 0M472.0 834.3a1.5 1.5 0 1 0 3 0a1.5 1.5 0 1 0-3 0M472.0 804.3a1.5 1.5 0 1 0 3 0a1.5 1.5 0 1 0-3 0M472.0 774.3a1.5 1.5 0 1 0 3 0a1.5 1.5 0 1 0-3 0M472.0 744.3a1.5 1.5 0 1 0 3 0a1.5 1.5 0 1 0-3 0M472.0 714.3a1.5 1.5 0 1 0 3 0a1.5 1.5 0 1 0-3 0M472.0 684.3a1.5 1.5 0 1 0 3 0a1.5 1.5 0 1 0-3 0M472.0 654.3a1.5 1.5 0 1 0 3 0a1.5 1.5 0 1 0-3 0M472.0 624.3a1.5 1.5 0 1 0 3 0a1.5 1.5 0 1 0-3 0M472.0 594.3a1.5 1.5 0 1 0 3 0a1.5 1.5 0 1 0-3 0M472.0 564.3a1.5 1.5 0 1 0 3 0a1.5 1.5 0 1 0-3 0M472.0 534.3a1.5 1.5 0 1 0 3 0a1.5 1.5 0 1 0-3 0M472.0 504.3a1.5 1.5 0 1 0 3 0a1.5 1.5 0 1 0-3 0M472.0 474.3a1.5 1.5 0 1 0 3 0a1.5 1.5 0 1 0-3 0M472.0 444.3a1.5 1.5 0 1 0 3 0a1.5 1.5 0 1 0-3 0M472.0 414.3a1.5 1.5 0 1 0 3 0a1.5 1.5 0 1 0-3 0M472.0 384.3a1.5 1.5 0 1 0 3 0a1.5 1.5 0 1 0-3 0M472.0 354.3a1.5 1.5 0 1 0 3 0a1.5 1.5 0 1 0-3 0M472.0 324.3a1.5 1.5 0 1 0 3 0a1.5 1.5 0 1 0-3 0M472.0 294.3a1.5 1.5 0 1 0 3 0a1.5 1.5 0 1 0-3 0M502.0 894.3a1.5 1.5 0 1 0 3 0a1.5 1.5 0 1 0-3 0M502.0 864.3a1.5 1.5 0 1 0 3 0a1.5 1.5 0 1 0-3 0M502.0 834.3a1.5 1.5 0 1 0 3 0a1.5 1.5 0 1 0-3 0M502.0 804.3a1.5 1.5 0 1 0 3 0a1.5 1.5 0 1 0-3 0M502.0 774.3a1.5 1.5 0 1 0 3 0a1.5 1.5 0 1 0-3 0M502.0 744.3a1.5 1.5 0 1 0 3 0a1.5 1.5 0 1 0-3 0M502.0 714.3a1.5 1.5 0 1 0 3 0a1.5 1.5 0 1 0-3 0M502.0 684.3a1.5 1.5 0 1 0 3 0a1.5 1.5 0 1 0-3 0M502.0 654.3a1.5 1.5 0 1 0 3 0a1.5 1.5 0 1 0-3 0M502.0 624.3a1.5 1.5 0 1 0 3 0a1.5 1.5 0 1 0-3 0M502.0 594.3a1.5 1.5 0 1 0 3 0a1.5 1.5 0 1 0-3 0M502.0 564.3a1.5 1.5 0 1 0 3 0a1.5 1.5 0 1 0-3 0M502.0 534.3a1.5 1.5 0 1 0 3 0a1.5 1.5 0 1 0-3 0M502.0 504.3a1.5 1.5 0 1 0 3 0a1.5 1.5 0 1 0-3 0M502.0 474.3a1.5 1.5 0 1 0 3 0a1.5 1.5 0 1 0-3 0M502.0 444.3a1.5 1.5 0 1 0 3 0a1.5 1.5 0 1 0-3 0M502.0 414.3a1.5 1.5 0 1 0 3 0a1.5 1.5 0 1 0-3 0M502.0 384.3a1.5 1.5 0 1 0 3 0a1.5 1.5 0 1 0-3 0M502.0 354.3a1.5 1.5 0 1 0 3 0a1.5 1.5 0 1 0-3 0M502.0 324.3a1.5 1.5 0 1 0 3 0a1.5 1.5 0 1 0-3 0M502.0 294.3a1.5 1.5 0 1 0 3 0a1.5 1.5 0 1 0-3 0M532.0 894.3a1.5 1.5 0 1 0 3 0a1.5 1.5 0 1 0-3 0M532.0 864.3a1.5 1.5 0 1 0 3 0a1.5 1.5 0 1 0-3 0M532.0 834.3a1.5 1.5 0 1 0 3 0a1.5 1.5 0 1 0-3 0M532.0 804.3a1.5 1.5 0 1 0 3 0a1.5 1.5 0 1 0-3 0M532.0 774.3a1.5 1.5 0 1 0 3 0a1.5 1.5 0 1 0-3 0M532.0 744.3a1.5 1.5 0 1 0 3 0a1.5 1.5 0 1 0-3 0M532.0 714.3a1.5 1.5 0 1 0 3 0a1.5 1.5 0 1 0-3 0M532.0 684.3a1.5 1.5 0 1 0 3 0a1.5 1.5 0 1 0-3 0M532.0 654.3a1.5 1.5 0 1 0 3 0a1.5 1.5 0 1 0-3 0M532.0 624.3a1.5 1.5 0 1 0 3 0a1.5 1.5 0 1 0-3 0M532.0 594.3a1.5 1.5 0 1 0 3 0a1.5 1.5 0 1 0-3 0M532.0 564.3a1.5 1.5 0 1 0 3 0a1.5 1.5 0 1 0-3 0M532.0 534.3a1.5 1.5 0 1 0 3 0a1.5 1.5 0 1 0-3 0M532.0 504.3a1.5 1.5 0 1 0 3 0a1.5 1.5 0 1 0-3 0M532.0 474.3a1.5 1.5 0 1 0 3 0a1.5 1.5 0 1 0-3 0M532.0 444.3a1.5 1.5 0 1 0 3 0a1.5 1.5 0 1 0-3 0M532.0 414.3a1.5 1.5 0 1 0 3 0a1.5 1.5 0 1 0-3 0M532.0 384.3a1.5 1.5 0 1 0 3 0a1.5 1.5 0 1 0-3 0M532.0 354.3a1.5 1.5 0 1 0 3 0a1.5 1.5 0 1 0-3 0M532.0 324.3a1.5 1.5 0 1 0 3 0a1.5 1.5 0 1 0-3 0M532.0 294.3a1.5 1.5 0 1 0 3 0a1.5 1.5 0 1 0-3 0M562.0 894.3a1.5 1.5 0 1 0 3 0a1.5 1.5 0 1 0-3 0M562.0 864.3a1.5 1.5 0 1 0 3 0a1.5 1.5 0 1 0-3 0M562.0 834.3a1.5 1.5 0 1 0 3 0a1.5 1.5 0 1 0-3 0M562.0 804.3a1.5 1.5 0 1 0 3 0a1.5 1.5 0 1 0-3 0M562.0 774.3a1.5 1.5 0 1 0 3 0a1.5 1.5 0 1 0-3 0M562.0 744.3a1.5 1.5 0 1 0 3 0a1.5 1.5 0 1 0-3 0M562.0 714.3a1.5 1.5 0 1 0 3 0a1.5 1.5 0 1 0-3 0M562.0 684.3a1.5 1.5 0 1 0 3 0a1.5 1.5 0 1 0-3 0M562.0 654.3a1.5 1.5 0 1 0 3 0a1.5 1.5 0 1 0-3 0M562.0 624.3a1.5 1.5 0 1 0 3 0a1.5 1.5 0 1 0-3 0M562.0 594.3a1.5 1.5 0 1 0 3 0a1.5 1.5 0 1 0-3 0M562.0 564.3a1.5 1.5 0 1 0 3 0a1.5 1.5 0 1 0-3 0M562.0 534.3a1.5 1.5 0 1 0 3 0a1.5 1.5 0 1 0-3 0M562.0 504.3a1.5 1.5 0 1 0 3 0a1.5 1.5 0 1 0-3 0M562.0 474.3a1.5 1.5 0 1 0 3 0a1.5 1.5 0 1 0-3 0M562.0 444.3a1.5 1.5 0 1 0 3 0a1.5 1.5 0 1 0-3 0M562.0 414.3a1.5 1.5 0 1 0 3 0a1.5 1.5 0 1 0-3 0M562.0 384.3a1.5 1.5 0 1 0 3 0a1.5 1.5 0 1 0-3 0M562.0 354.3a1.5 1.5 0 1 0 3 0a1.5 1.5 0 1 0-3 0M562.0 324.3a1.5 1.5 0 1 0 3 0a1.5 1.5 0 1 0-3 0M562.0 294.3a1.5 1.5 0 1 0 3 0a1.5 1.5 0 1 0-3 0M592.0 894.3a1.5 1.5 0 1 0 3 0a1.5 1.5 0 1 0-3 0M592.0 864.3a1.5 1.5 0 1 0 3 0a1.5 1.5 0 1 0-3 0M592.0 834.3a1.5 1.5 0 1 0 3 0a1.5 1.5 0 1 0-3 0M592.0 804.3a1.5 1.5 0 1 0 3 0a1.5 1.5 0 1 0-3 0M592.0 774.3a1.5 1.5 0 1 0 3 0a1.5 1.5 0 1 0-3 0M592.0 744.3a1.5 1.5 0 1 0 3 0a1.5 1.5 0 1 0-3 0M592.0 714.3a1.5 1.5 0 1 0 3 0a1.5 1.5 0 1 0-3 0M592.0 684.3a1.5 1.5 0 1 0 3 0a1.5 1.5 0 1 0-3 0M592.0 654.3a1.5 1.5 0 1 0 3 0a1.5 1.5 0 1 0-3 0M592.0 624.3a1.5 1.5 0 1 0 3 0a1.5 1.5 0 1 0-3 0M592.0 594.3a1.5 1.5 0 1 0 3 0a1.5 1.5 0 1 0-3 0M592.0 564.3a1.5 1.5 0 1 0 3 0a1.5 1.5 0 1 0-3 0M592.0 534.3a1.5 1.5 0 1 0 3 0a1.5 1.5 0 1 0-3 0M592.0 504.3a1.5 1.5 0 1 0 3 0a1.5 1.5 0 1 0-3 0M592.0 474.3a1.5 1.5 0 1 0 3 0a1.5 1.5 0 1 0-3 0M592.0 444.3a1.5 1.5 0 1 0 3 0a1.5 1.5 0 1 0-3 0M592.0 414.3a1.5 1.5 0 1 0 3 0a1.5 1.5 0 1 0-3 0M592.0 384.3a1.5 1.5 0 1 0 3 0a1.5 1.5 0 1 0-3 0M592.0 354.3a1.5 1.5 0 1 0 3 0a1.5 1.5 0 1 0-3 0M592.0 324.3a1.5 1.5 0 1 0 3 0a1.5 1.5 0 1 0-3 0M592.0 294.3a1.5 1.5 0 1 0 3 0a1.5 1.5 0 1 0-3 0M622.0 894.3a1.5 1.5 0 1 0 3 0a1.5 1.5 0 1 0-3 0M622.0 864.3a1.5 1.5 0 1 0 3 0a1.5 1.5 0 1 0-3 0M622.0 834.3a1.5 1.5 0 1 0 3 0a1.5 1.5 0 1 0-3 0M622.0 804.3a1.5 1.5 0 1 0 3 0a1.5 1.5 0 1 0-3 0M622.0 774.3a1.5 1.5 0 1 0 3 0a1.5 1.5 0 1 0-3 0M622.0 744.3a1.5 1.5 0 1 0 3 0a1.5 1.5 0 1 0-3 0M622.0 714.3a1.5 1.5 0 1 0 3 0a1.5 1.5 0 1 0-3 0M622.0 684.3a1.5 1.5 0 1 0 3 0a1.5 1.5 0 1 0-3 0M622.0 654.3a1.5 1.5 0 1 0 3 0a1.5 1.5 0 1 0-3 0M622.0 624.3a1.5 1.5 0 1 0 3 0a1.5 1.5 0 1 0-3 0M622.0 594.3a1.5 1.5 0 1 0 3 0a1.5 1.5 0 1 0-3 0M622.0 564.3a1.5 1.5 0 1 0 3 0a1.5 1.5 0 1 0-3 0M622.0 534.3a1.5 1.5 0 1 0 3 0a1.5 1.5 0 1 0-3 0M622.0 504.3a1.5 1.5 0 1 0 3 0a1.5 1.5 0 1 0-3 0M622.0 474.3a1.5 1.5 0 1 0 3 0a1.5 1.5 0 1 0-3 0M622.0 444.3a1.5 1.5 0 1 0 3 0a1.5 1.5 0 1 0-3 0M622.0 414.3a1.5 1.5 0 1 0 3 0a1.5 1.5 0 1 0-3 0M622.0 384.3a1.5 1.5 0 1 0 3 0a1.5 1.5 0 1 0-3 0M622.0 354.3a1.5 1.5 0 1 0 3 0a1.5 1.5 0 1 0-3 0M622.0 324.3a1.5 1.5 0 1 0 3 0a1.5 1.5 0 1 0-3 0M622.0 294.3a1.5 1.5 0 1 0 3 0a1.5 1.5 0 1 0-3 0M652.0 894.3a1.5 1.5 0 1 0 3 0a1.5 1.5 0 1 0-3 0M652.0 864.3a1.5 1.5 0 1 0 3 0a1.5 1.5 0 1 0-3 0M652.0 834.3a1.5 1.5 0 1 0 3 0a1.5 1.5 0 1 0-3 0M652.0 804.3a1.5 1.5 0 1 0 3 0a1.5 1.5 0 1 0-3 0M652.0 774.3a1.5 1.5 0 1 0 3 0a1.5 1.5 0 1 0-3 0M652.0 744.3a1.5 1.5 0 1 0 3 0a1.5 1.5 0 1 0-3 0M652.0 714.3a1.5 1.5 0 1 0 3 0a1.5 1.5 0 1 0-3 0M652.0 684.3a1.5 1.5 0 1 0 3 0a1.5 1.5 0 1 0-3 0M652.0 654.3a1.5 1.5 0 1 0 3 0a1.5 1.5 0 1 0-3 0M652.0 624.3a1.5 1.5 0 1 0 3 0a1.5 1.5 0 1 0-3 0M652.0 594.3a1.5 1.5 0 1 0 3 0a1.5 1.5 0 1 0-3 0M652.0 564.3a1.5 1.5 0 1 0 3 0a1.5 1.5 0 1 0-3 0M652.0 534.3a1.5 1.5 0 1 0 3 0a1.5 1.5 0 1 0-3 0M652.0 504.3a1.5 1.5 0 1 0 3 0a1.5 1.5 0 1 0-3 0M652.0 474.3a1.5 1.5 0 1 0 3 0a1.5 1.5 0 1 0-3 0M652.0 444.3a1.5 1.5 0 1 0 3 0a1.5 1.5 0 1 0-3 0M652.0 414.3a1.5 1.5 0 1 0 3 0a1.5 1.5 0 1 0-3 0M652.0 384.3a1.5 1.5 0 1 0 3 0a1.5 1.5 0 1 0-3 0M652.0 354.3a1.5 1.5 0 1 0 3 0a1.5 1.5 0 1 0-3 0M652.0 324.3a1.5 1.5 0 1 0 3 0a1.5 1.5 0 1 0-3 0M652.0 294.3a1.5 1.5 0 1 0 3 0a1.5 1.5 0 1 0-3 0M682.0 894.3a1.5 1.5 0 1 0 3 0a1.5 1.5 0 1 0-3 0M682.0 864.3a1.5 1.5 0 1 0 3 0a1.5 1.5 0 1 0-3 0M682.0 834.3a1.5 1.5 0 1 0 3 0a1.5 1.5 0 1 0-3 0M682.0 804.3a1.5 1.5 0 1 0 3 0a1.5 1.5 0 1 0-3 0M682.0 774.3a1.5 1.5 0 1 0 3 0a1.5 1.5 0 1 0-3 0M682.0 744.3a1.5 1.5 0 1 0 3 0a1.5 1.5 0 1 0-3 0M682.0 714.3a1.5 1.5 0 1 0 3 0a1.5 1.5 0 1 0-3 0M682.0 684.3a1.5 1.5 0 1 0 3 0a1.5 1.5 0 1 0-3 0M682.0 654.3a1.5 1.5 0 1 0 3 0a1.5 1.5 0 1 0-3 0M682.0 624.3a1.5 1.5 0 1 0 3 0a1.5 1.5 0 1 0-3 0M682.0 594.3a1.5 1.5 0 1 0 3 0a1.5 1.5 0 1 0-3 0M682.0 564.3a1.5 1.5 0 1 0 3 0a1.5 1.5 0 1 0-3 0M682.0 534.3a1.5 1.5 0 1 0 3 0a1.5 1.5 0 1 0-3 0M682.0 504.3a1.5 1.5 0 1 0 3 0a1.5 1.5 0 1 0-3 0M682.0 474.3a1.5 1.5 0 1 0 3 0a1.5 1.5 0 1 0-3 0M682.0 444.3a1.5 1.5 0 1 0 3 0a1.5 1.5 0 1 0-3 0M682.0 414.3a1.5 1.5 0 1 0 3 0a1.5 1.5 0 1 0-3 0M682.0 384.3a1.5 1.5 0 1 0 3 0a1.5 1.5 0 1 0-3 0M682.0 354.3a1.5 1.5 0 1 0 3 0a1.5 1.5 0 1 0-3 0M682.0 324.3a1.5 1.5 0 1 0 3 0a1.5 1.5 0 1 0-3 0M682.0 294.3a1.5 1.5 0 1 0 3 0a1.5 1.5 0 1 0-3 0M712.0 894.3a1.5 1.5 0 1 0 3 0a1.5 1.5 0 1 0-3 0M712.0 864.3a1.5 1.5 0 1 0 3 0a1.5 1.5 0 1 0-3 0M712.0 834.3a1.5 1.5 0 1 0 3 0a1.5 1.5 0 1 0-3 0M712.0 804.3a1.5 1.5 0 1 0 3 0a1.5 1.5 0 1 0-3 0M712.0 774.3a1.5 1.5 0 1 0 3 0a1.5 1.5 0 1 0-3 0M712.0 744.3a1.5 1.5 0 1 0 3 0a1.5 1.5 0 1 0-3 0M712.0 714.3a1.5 1.5 0 1 0 3 0a1.5 1.5 0 1 0-3 0M712.0 684.3a1.5 1.5 0 1 0 3 0a1.5 1.5 0 1 0-3 0M712.0 654.3a1.5 1.5 0 1 0 3 0a1.5 1.5 0 1 0-3 0M712.0 624.3a1.5 1.5 0 1 0 3 0a1.5 1.5 0 1 0-3 0M712.0 594.3a1.5 1.5 0 1 0 3 0a1.5 1.5 0 1 0-3 0M712.0 564.3a1.5 1.5 0 1 0 3 0a1.5 1.5 0 1 0-3 0M712.0 534.3a1.5 1.5 0 1 0 3 0a1.5 1.5 0 1 0-3 0M712.0 504.3a1.5 1.5 0 1 0 3 0a1.5 1.5 0 1 0-3 0M712.0 474.3a1.5 1.5 0 1 0 3 0a1.5 1.5 0 1 0-3 0M712.0 444.3a1.5 1.5 0 1 0 3 0a1.5 1.5 0 1 0-3 0M712.0 414.3a1.5 1.5 0 1 0 3 0a1.5 1.5 0 1 0-3 0M712.0 384.3a1.5 1.5 0 1 0 3 0a1.5 1.5 0 1 0-3 0M712.0 354.3a1.5 1.5 0 1 0 3 0a1.5 1.5 0 1 0-3 0M712.0 324.3a1.5 1.5 0 1 0 3 0a1.5 1.5 0 1 0-3 0M712.0 294.3a1.5 1.5 0 1 0 3 0a1.5 1.5 0 1 0-3 0M742.0 894.3a1.5 1.5 0 1 0 3 0a1.5 1.5 0 1 0-3 0M742.0 864.3a1.5 1.5 0 1 0 3 0a1.5 1.5 0 1 0-3 0M742.0 834.3a1.5 1.5 0 1 0 3 0a1.5 1.5 0 1 0-3 0M742.0 804.3a1.5 1.5 0 1 0 3 0a1.5 1.5 0 1 0-3 0M742.0 774.3a1.5 1.5 0 1 0 3 0a1.5 1.5 0 1 0-3 0M742.0 744.3a1.5 1.5 0 1 0 3 0a1.5 1.5 0 1 0-3 0M742.0 714.3a1.5 1.5 0 1 0 3 0a1.5 1.5 0 1 0-3 0M742.0 684.3a1.5 1.5 0 1 0 3 0a1.5 1.5 0 1 0-3 0M742.0 654.3a1.5 1.5 0 1 0 3 0a1.5 1.5 0 1 0-3 0M742.0 624.3a1.5 1.5 0 1 0 3 0a1.5 1.5 0 1 0-3 0M742.0 594.3a1.5 1.5 0 1 0 3 0a1.5 1.5 0 1 0-3 0M742.0 564.3a1.5 1.5 0 1 0 3 0a1.5 1.5 0 1 0-3 0M742.0 534.3a1.5 1.5 0 1 0 3 0a1.5 1.5 0 1 0-3 0M742.0 504.3a1.5 1.5 0 1 0 3 0a1.5 1.5 0 1 0-3 0M742.0 474.3a1.5 1.5 0 1 0 3 0a1.5 1.5 0 1 0-3 0M742.0 444.3a1.5 1.5 0 1 0 3 0a1.5 1.5 0 1 0-3 0M742.0 414.3a1.5 1.5 0 1 0 3 0a1.5 1.5 0 1 0-3 0M742.0 384.3a1.5 1.5 0 1 0 3 0a1.5 1.5 0 1 0-3 0M742.0 354.3a1.5 1.5 0 1 0 3 0a1.5 1.5 0 1 0-3 0M742.0 324.3a1.5 1.5 0 1 0 3 0a1.5 1.5 0 1 0-3 0M742.0 294.3a1.5 1.5 0 1 0 3 0a1.5 1.5 0 1 0-3 0M772.0 894.3a1.5 1.5 0 1 0 3 0a1.5 1.5 0 1 0-3 0M772.0 864.3a1.5 1.5 0 1 0 3 0a1.5 1.5 0 1 0-3 0M772.0 834.3a1.5 1.5 0 1 0 3 0a1.5 1.5 0 1 0-3 0M772.0 804.3a1.5 1.5 0 1 0 3 0a1.5 1.5 0 1 0-3 0M772.0 774.3a1.5 1.5 0 1 0 3 0a1.5 1.5 0 1 0-3 0M772.0 744.3a1.5 1.5 0 1 0 3 0a1.5 1.5 0 1 0-3 0M772.0 714.3a1.5 1.5 0 1 0 3 0a1.5 1.5 0 1 0-3 0M772.0 684.3a1.5 1.5 0 1 0 3 0a1.5 1.5 0 1 0-3 0M772.0 654.3a1.5 1.5 0 1 0 3 0a1.5 1.5 0 1 0-3 0M772.0 624.3a1.5 1.5 0 1 0 3 0a1.5 1.5 0 1 0-3 0M772.0 594.3a1.5 1.5 0 1 0 3 0a1.5 1.5 0 1 0-3 0M772.0 564.3a1.5 1.5 0 1 0 3 0a1.5 1.5 0 1 0-3 0M772.0 534.3a1.5 1.5 0 1 0 3 0a1.5 1.5 0 1 0-3 0M772.0 504.3a1.5 1.5 0 1 0 3 0a1.5 1.5 0 1 0-3 0M772.0 474.3a1.5 1.5 0 1 0 3 0a1.5 1.5 0 1 0-3 0M772.0 444.3a1.5 1.5 0 1 0 3 0a1.5 1.5 0 1 0-3 0M772.0 414.3a1.5 1.5 0 1 0 3 0a1.5 1.5 0 1 0-3 0M772.0 384.3a1.5 1.5 0 1 0 3 0a1.5 1.5 0 1 0-3 0M772.0 354.3a1.5 1.5 0 1 0 3 0a1.5 1.5 0 1 0-3 0M772.0 324.3a1.5 1.5 0 1 0 3 0a1.5 1.5 0 1 0-3 0M772.0 294.3a1.5 1.5 0 1 0 3 0a1.5 1.5 0 1 0-3 0M802.0 894.3a1.5 1.5 0 1 0 3 0a1.5 1.5 0 1 0-3 0M802.0 864.3a1.5 1.5 0 1 0 3 0a1.5 1.5 0 1 0-3 0M802.0 834.3a1.5 1.5 0 1 0 3 0a1.5 1.5 0 1 0-3 0M802.0 804.3a1.5 1.5 0 1 0 3 0a1.5 1.5 0 1 0-3 0M802.0 774.3a1.5 1.5 0 1 0 3 0a1.5 1.5 0 1 0-3 0M802.0 744.3a1.5 1.5 0 1 0 3 0a1.5 1.5 0 1 0-3 0M802.0 714.3a1.5 1.5 0 1 0 3 0a1.5 1.5 0 1 0-3 0M802.0 684.3a1.5 1.5 0 1 0 3 0a1.5 1.5 0 1 0-3 0M802.0 654.3a1.5 1.5 0 1 0 3 0a1.5 1.5 0 1 0-3 0M802.0 624.3a1.5 1.5 0 1 0 3 0a1.5 1.5 0 1 0-3 0M802.0 594.3a1.5 1.5 0 1 0 3 0a1.5 1.5 0 1 0-3 0M802.0 564.3a1.5 1.5 0 1 0 3 0a1.5 1.5 0 1 0-3 0M802.0 534.3a1.5 1.5 0 1 0 3 0a1.5 1.5 0 1 0-3 0M802.0 504.3a1.5 1.5 0 1 0 3 0a1.5 1.5 0 1 0-3 0M802.0 474.3a1.5 1.5 0 1 0 3 0a1.5 1.5 0 1 0-3 0M802.0 444.3a1.5 1.5 0 1 0 3 0a1.5 1.5 0 1 0-3 0M802.0 414.3a1.5 1.5 0 1 0 3 0a1.5 1.5 0 1 0-3 0M802.0 384.3a1.5 1.5 0 1 0 3 0a1.5 1.5 0 1 0-3 0M802.0 354.3a1.5 1.5 0 1 0 3 0a1.5 1.5 0 1 0-3 0M802.0 324.3a1.5 1.5 0 1 0 3 0a1.5 1.5 0 1 0-3 0M802.0 294.3a1.5 1.5 0 1 0 3 0a1.5 1.5 0 1 0-3 0M832.0 894.3a1.5 1.5 0 1 0 3 0a1.5 1.5 0 1 0-3 0M832.0 864.3a1.5 1.5 0 1 0 3 0a1.5 1.5 0 1 0-3 0M832.0 834.3a1.5 1.5 0 1 0 3 0a1.5 1.5 0 1 0-3 0M832.0 804.3a1.5 1.5 0 1 0 3 0a1.5 1.5 0 1 0-3 0M832.0 774.3a1.5 1.5 0 1 0 3 0a1.5 1.5 0 1 0-3 0M832.0 744.3a1.5 1.5 0 1 0 3 0a1.5 1.5 0 1 0-3 0M832.0 714.3a1.5 1.5 0 1 0 3 0a1.5 1.5 0 1 0-3 0M832.0 684.3a1.5 1.5 0 1 0 3 0a1.5 1.5 0 1 0-3 0M832.0 654.3a1.5 1.5 0 1 0 3 0a1.5 1.5 0 1 0-3 0M832.0 624.3a1.5 1.5 0 1 0 3 0a1.5 1.5 0 1 0-3 0M832.0 594.3a1.5 1.5 0 1 0 3 0a1.5 1.5 0 1 0-3 0M832.0 564.3a1.5 1.5 0 1 0 3 0a1.5 1.5 0 1 0-3 0M832.0 534.3a1.5 1.5 0 1 0 3 0a1.5 1.5 0 1 0-3 0M832.0 504.3a1.5 1.5 0 1 0 3 0a1.5 1.5 0 1 0-3 0M832.0 474.3a1.5 1.5 0 1 0 3 0a1.5 1.5 0 1 0-3 0M832.0 444.3a1.5 1.5 0 1 0 3 0a1.5 1.5 0 1 0-3 0M832.0 414.3a1.5 1.5 0 1 0 3 0a1.5 1.5 0 1 0-3 0M832.0 384.3a1.5 1.5 0 1 0 3 0a1.5 1.5 0 1 0-3 0M832.0 354.3a1.5 1.5 0 1 0 3 0a1.5 1.5 0 1 0-3 0M832.0 324.3a1.5 1.5 0 1 0 3 0a1.5 1.5 0 1 0-3 0M832.0 294.3a1.5 1.5 0 1 0 3 0a1.5 1.5 0 1 0-3 0M862.0 894.3a1.5 1.5 0 1 0 3 0a1.5 1.5 0 1 0-3 0M862.0 864.3a1.5 1.5 0 1 0 3 0a1.5 1.5 0 1 0-3 0M862.0 834.3a1.5 1.5 0 1 0 3 0a1.5 1.5 0 1 0-3 0M862.0 804.3a1.5 1.5 0 1 0 3 0a1.5 1.5 0 1 0-3 0M862.0 774.3a1.5 1.5 0 1 0 3 0a1.5 1.5 0 1 0-3 0M862.0 744.3a1.5 1.5 0 1 0 3 0a1.5 1.5 0 1 0-3 0M862.0 714.3a1.5 1.5 0 1 0 3 0a1.5 1.5 0 1 0-3 0M862.0 684.3a1.5 1.5 0 1 0 3 0a1.5 1.5 0 1 0-3 0M862.0 654.3a1.5 1.5 0 1 0 3 0a1.5 1.5 0 1 0-3 0M862.0 624.3a1.5 1.5 0 1 0 3 0a1.5 1.5 0 1 0-3 0M862.0 594.3a1.5 1.5 0 1 0 3 0a1.5 1.5 0 1 0-3 0M862.0 564.3a1.5 1.5 0 1 0 3 0a1.5 1.5 0 1 0-3 0M862.0 534.3a1.5 1.5 0 1 0 3 0a1.5 1.5 0 1 0-3 0M862.0 504.3a1.5 1.5 0 1 0 3 0a1.5 1.5 0 1 0-3 0M862.0 474.3a1.5 1.5 0 1 0 3 0a1.5 1.5 0 1 0-3 0M862.0 444.3a1.5 1.5 0 1 0 3 0a1.5 1.5 0 1 0-3 0M862.0 414.3a1.5 1.5 0 1 0 3 0a1.5 1.5 0 1 0-3 0M862.0 384.3a1.5 1.5 0 1 0 3 0a1.5 1.5 0 1 0-3 0M862.0 354.3a1.5 1.5 0 1 0 3 0a1.5 1.5 0 1 0-3 0M862.0 324.3a1.5 1.5 0 1 0 3 0a1.5 1.5 0 1 0-3 0M862.0 294.3a1.5 1.5 0 1 0 3 0a1.5 1.5 0 1 0-3 0M892.0 894.3a1.5 1.5 0 1 0 3 0a1.5 1.5 0 1 0-3 0M892.0 864.3a1.5 1.5 0 1 0 3 0a1.5 1.5 0 1 0-3 0M892.0 834.3a1.5 1.5 0 1 0 3 0a1.5 1.5 0 1 0-3 0M892.0 804.3a1.5 1.5 0 1 0 3 0a1.5 1.5 0 1 0-3 0M892.0 774.3a1.5 1.5 0 1 0 3 0a1.5 1.5 0 1 0-3 0M892.0 744.3a1.5 1.5 0 1 0 3 0a1.5 1.5 0 1 0-3 0M892.0 714.3a1.5 1.5 0 1 0 3 0a1.5 1.5 0 1 0-3 0M892.0 684.3a1.5 1.5 0 1 0 3 0a1.5 1.5 0 1 0-3 0M892.0 654.3a1.5 1.5 0 1 0 3 0a1.5 1.5 0 1 0-3 0M892.0 624.3a1.5 1.5 0 1 0 3 0a1.5 1.5 0 1 0-3 0M892.0 594.3a1.5 1.5 0 1 0 3 0a1.5 1.5 0 1 0-3 0M892.0 564.3a1.5 1.5 0 1 0 3 0a1.5 1.5 0 1 0-3 0M892.0 534.3a1.5 1.5 0 1 0 3 0a1.5 1.5 0 1 0-3 0M892.0 504.3a1.5 1.5 0 1 0 3 0a1.5 1.5 0 1 0-3 0M892.0 474.3a1.5 1.5 0 1 0 3 0a1.5 1.5 0 1 0-3 0M892.0 444.3a1.5 1.5 0 1 0 3 0a1.5 1.5 0 1 0-3 0M892.0 414.3a1.5 1.5 0 1 0 3 0a1.5 1.5 0 1 0-3 0M892.0 384.3a1.5 1.5 0 1 0 3 0a1.5 1.5 0 1 0-3 0M892.0 354.3a1.5 1.5 0 1 0 3 0a1.5 1.5 0 1 0-3 0M892.0 324.3a1.5 1.5 0 1 0 3 0a1.5 1.5 0 1 0-3 0M892.0 294.3a1.5 1.5 0 1 0 3 0a1.5 1.5 0 1 0-3 0M922.0 894.3a1.5 1.5 0 1 0 3 0a1.5 1.5 0 1 0-3 0M922.0 864.3a1.5 1.5 0 1 0 3 0a1.5 1.5 0 1 0-3 0M922.0 834.3a1.5 1.5 0 1 0 3 0a1.5 1.5 0 1 0-3 0M922.0 804.3a1.5 1.5 0 1 0 3 0a1.5 1.5 0 1 0-3 0M922.0 774.3a1.5 1.5 0 1 0 3 0a1.5 1.5 0 1 0-3 0M922.0 744.3a1.5 1.5 0 1 0 3 0a1.5 1.5 0 1 0-3 0M922.0 714.3a1.5 1.5 0 1 0 3 0a1.5 1.5 0 1 0-3 0M922.0 684.3a1.5 1.5 0 1 0 3 0a1.5 1.5 0 1 0-3 0M922.0 654.3a1.5 1.5 0 1 0 3 0a1.5 1.5 0 1 0-3 0M922.0 624.3a1.5 1.5 0 1 0 3 0a1.5 1.5 0 1 0-3 0M922.0 594.3a1.5 1.5 0 1 0 3 0a1.5 1.5 0 1 0-3 0M922.0 564.3a1.5 1.5 0 1 0 3 0a1.5 1.5 0 1 0-3 0M922.0 534.3a1.5 1.5 0 1 0 3 0a1.5 1.5 0 1 0-3 0M922.0 504.3a1.5 1.5 0 1 0 3 0a1.5 1.5 0 1 0-3 0M922.0 474.3a1.5 1.5 0 1 0 3 0a1.5 1.5 0 1 0-3 0M922.0 444.3a1.5 1.5 0 1 0 3 0a1.5 1.5 0 1 0-3 0M922.0 414.3a1.5 1.5 0 1 0 3 0a1.5 1.5 0 1 0-3 0M922.0 384.3a1.5 1.5 0 1 0 3 0a1.5 1.5 0 1 0-3 0M922.0 354.3a1.5 1.5 0 1 0 3 0a1.5 1.5 0 1 0-3 0M922.0 324.3a1.5 1.5 0 1 0 3 0a1.5 1.5 0 1 0-3 0M922.0 294.3a1.5 1.5 0 1 0 3 0a1.5 1.5 0 1 0-3 0M952.0 894.3a1.5 1.5 0 1 0 3 0a1.5 1.5 0 1 0-3 0M952.0 864.3a1.5 1.5 0 1 0 3 0a1.5 1.5 0 1 0-3 0M952.0 834.3a1.5 1.5 0 1 0 3 0a1.5 1.5 0 1 0-3 0M952.0 804.3a1.5 1.5 0 1 0 3 0a1.5 1.5 0 1 0-3 0M952.0 774.3a1.5 1.5 0 1 0 3 0a1.5 1.5 0 1 0-3 0M952.0 744.3a1.5 1.5 0 1 0 3 0a1.5 1.5 0 1 0-3 0M952.0 714.3a1.5 1.5 0 1 0 3 0a1.5 1.5 0 1 0-3 0M952.0 684.3a1.5 1.5 0 1 0 3 0a1.5 1.5 0 1 0-3 0M952.0 654.3a1.5 1.5 0 1 0 3 0a1.5 1.5 0 1 0-3 0M952.0 624.3a1.5 1.5 0 1 0 3 0a1.5 1.5 0 1 0-3 0M952.0 594.3a1.5 1.5 0 1 0 3 0a1.5 1.5 0 1 0-3 0M952.0 564.3a1.5 1.5 0 1 0 3 0a1.5 1.5 0 1 0-3 0M952.0 534.3a1.5 1.5 0 1 0 3 0a1.5 1.5 0 1 0-3 0M952.0 504.3a1.5 1.5 0 1 0 3 0a1.5 1.5 0 1 0-3 0M952.0 474.3a1.5 1.5 0 1 0 3 0a1.5 1.5 0 1 0-3 0M952.0 444.3a1.5 1.5 0 1 0 3 0a1.5 1.5 0 1 0-3 0M952.0 414.3a1.5 1.5 0 1 0 3 0a1.5 1.5 0 1 0-3 0M952.0 384.3a1.5 1.5 0 1 0 3 0a1.5 1.5 0 1 0-3 0M952.0 354.3a1.5 1.5 0 1 0 3 0a1.5 1.5 0 1 0-3 0M952.0 324.3a1.5 1.5 0 1 0 3 0a1.5 1.5 0 1 0-3 0M952.0 294.3a1.5 1.5 0 1 0 3 0a1.5 1.5 0 1 0-3 0M982.0 894.3a1.5 1.5 0 1 0 3 0a1.5 1.5 0 1 0-3 0M982.0 864.3a1.5 1.5 0 1 0 3 0a1.5 1.5 0 1 0-3 0M982.0 834.3a1.5 1.5 0 1 0 3 0a1.5 1.5 0 1 0-3 0M982.0 804.3a1.5 1.5 0 1 0 3 0a1.5 1.5 0 1 0-3 0M982.0 774.3a1.5 1.5 0 1 0 3 0a1.5 1.5 0 1 0-3 0M982.0 744.3a1.5 1.5 0 1 0 3 0a1.5 1.5 0 1 0-3 0M982.0 714.3a1.5 1.5 0 1 0 3 0a1.5 1.5 0 1 0-3 0M982.0 684.3a1.5 1.5 0 1 0 3 0a1.5 1.5 0 1 0-3 0M982.0 654.3a1.5 1.5 0 1 0 3 0a1.5 1.5 0 1 0-3 0M982.0 624.3a1.5 1.5 0 1 0 3 0a1.5 1.5 0 1 0-3 0M982.0 594.3a1.5 1.5 0 1 0 3 0a1.5 1.5 0 1 0-3 0M982.0 564.3a1.5 1.5 0 1 0 3 0a1.5 1.5 0 1 0-3 0M982.0 534.3a1.5 1.5 0 1 0 3 0a1.5 1.5 0 1 0-3 0M982.0 504.3a1.5 1.5 0 1 0 3 0a1.5 1.5 0 1 0-3 0M982.0 474.3a1.5 1.5 0 1 0 3 0a1.5 1.5 0 1 0-3 0M982.0 444.3a1.5 1.5 0 1 0 3 0a1.5 1.5 0 1 0-3 0M982.0 414.3a1.5 1.5 0 1 0 3 0a1.5 1.5 0 1 0-3 0M982.0 384.3a1.5 1.5 0 1 0 3 0a1.5 1.5 0 1 0-3 0M982.0 354.3a1.5 1.5 0 1 0 3 0a1.5 1.5 0 1 0-3 0M982.0 324.3a1.5 1.5 0 1 0 3 0a1.5 1.5 0 1 0-3 0M982.0 294.3a1.5 1.5 0 1 0 3 0a1.5 1.5 0 1 0-3 0M1012.0 894.3a1.5 1.5 0 1 0 3 0a1.5 1.5 0 1 0-3 0M1012.0 864.3a1.5 1.5 0 1 0 3 0a1.5 1.5 0 1 0-3 0M1012.0 834.3a1.5 1.5 0 1 0 3 0a1.5 1.5 0 1 0-3 0M1012.0 804.3a1.5 1.5 0 1 0 3 0a1.5 1.5 0 1 0-3 0M1012.0 774.3a1.5 1.5 0 1 0 3 0a1.5 1.5 0 1 0-3 0M1012.0 744.3a1.5 1.5 0 1 0 3 0a1.5 1.5 0 1 0-3 0M1012.0 714.3a1.5 1.5 0 1 0 3 0a1.5 1.5 0 1 0-3 0M1012.0 684.3a1.5 1.5 0 1 0 3 0a1.5 1.5 0 1 0-3 0M1012.0 654.3a1.5 1.5 0 1 0 3 0a1.5 1.5 0 1 0-3 0M1012.0 624.3a1.5 1.5 0 1 0 3 0a1.5 1.5 0 1 0-3 0M1012.0 594.3a1.5 1.5 0 1 0 3 0a1.5 1.5 0 1 0-3 0M1012.0 564.3a1.5 1.5 0 1 0 3 0a1.5 1.5 0 1 0-3 0M1012.0 534.3a1.5 1.5 0 1 0 3 0a1.5 1.5 0 1 0-3 0M1012.0 504.3a1.5 1.5 0 1 0 3 0a1.5 1.5 0 1 0-3 0M1012.0 474.3a1.5 1.5 0 1 0 3 0a1.5 1.5 0 1 0-3 0M1012.0 444.3a1.5 1.5 0 1 0 3 0a1.5 1.5 0 1 0-3 0M1012.0 414.3a1.5 1.5 0 1 0 3 0a1.5 1.5 0 1 0-3 0M1012.0 384.3a1.5 1.5 0 1 0 3 0a1.5 1.5 0 1 0-3 0M1012.0 354.3a1.5 1.5 0 1 0 3 0a1.5 1.5 0 1 0-3 0M1012.0 324.3a1.5 1.5 0 1 0 3 0a1.5 1.5 0 1 0-3 0M1012.0 294.3a1.5 1.5 0 1 0 3 0a1.5 1.5 0 1 0-3 0M1042.0 894.3a1.5 1.5 0 1 0 3 0a1.5 1.5 0 1 0-3 0M1042.0 864.3a1.5 1.5 0 1 0 3 0a1.5 1.5 0 1 0-3 0M1042.0 834.3a1.5 1.5 0 1 0 3 0a1.5 1.5 0 1 0-3 0M1042.0 804.3a1.5 1.5 0 1 0 3 0a1.5 1.5 0 1 0-3 0M1042.0 774.3a1.5 1.5 0 1 0 3 0a1.5 1.5 0 1 0-3 0M1042.0 744.3a1.5 1.5 0 1 0 3 0a1.5 1.5 0 1 0-3 0M1042.0 714.3a1.5 1.5 0 1 0 3 0a1.5 1.5 0 1 0-3 0M1042.0 684.3a1.5 1.5 0 1 0 3 0a1.5 1.5 0 1 0-3 0M1042.0 654.3a1.5 1.5 0 1 0 3 0a1.5 1.5 0 1 0-3 0M1042.0 624.3a1.5 1.5 0 1 0 3 0a1.5 1.5 0 1 0-3 0M1042.0 594.3a1.5 1.5 0 1 0 3 0a1.5 1.5 0 1 0-3 0M1042.0 564.3a1.5 1.5 0 1 0 3 0a1.5 1.5 0 1 0-3 0M1042.0 534.3a1.5 1.5 0 1 0 3 0a1.5 1.5 0 1 0-3 0M1042.0 504.3a1.5 1.5 0 1 0 3 0a1.5 1.5 0 1 0-3 0M1042.0 474.3a1.5 1.5 0 1 0 3 0a1.5 1.5 0 1 0-3 0M1042.0 444.3a1.5 1.5 0 1 0 3 0a1.5 1.5 0 1 0-3 0M1042.0 414.3a1.5 1.5 0 1 0 3 0a1.5 1.5 0 1 0-3 0M1042.0 384.3a1.5 1.5 0 1 0 3 0a1.5 1.5 0 1 0-3 0M1042.0 354.3a1.5 1.5 0 1 0 3 0a1.5 1.5 0 1 0-3 0M1042.0 324.3a1.5 1.5 0 1 0 3 0a1.5 1.5 0 1 0-3 0M1042.0 294.3a1.5 1.5 0 1 0 3 0a1.5 1.5 0 1 0-3 0M1072.0 894.3a1.5 1.5 0 1 0 3 0a1.5 1.5 0 1 0-3 0M1072.0 864.3a1.5 1.5 0 1 0 3 0a1.5 1.5 0 1 0-3 0M1072.0 834.3a1.5 1.5 0 1 0 3 0a1.5 1.5 0 1 0-3 0M1072.0 804.3a1.5 1.5 0 1 0 3 0a1.5 1.5 0 1 0-3 0M1072.0 774.3a1.5 1.5 0 1 0 3 0a1.5 1.5 0 1 0-3 0M1072.0 744.3a1.5 1.5 0 1 0 3 0a1.5 1.5 0 1 0-3 0M1072.0 714.3a1.5 1.5 0 1 0 3 0a1.5 1.5 0 1 0-3 0M1072.0 684.3a1.5 1.5 0 1 0 3 0a1.5 1.5 0 1 0-3 0M1072.0 654.3a1.5 1.5 0 1 0 3 0a1.5 1.5 0 1 0-3 0M1072.0 624.3a1.5 1.5 0 1 0 3 0a1.5 1.5 0 1 0-3 0M1072.0 594.3a1.5 1.5 0 1 0 3 0a1.5 1.5 0 1 0-3 0M1072.0 564.3a1.5 1.5 0 1 0 3 0a1.5 1.5 0 1 0-3 0M1072.0 534.3a1.5 1.5 0 1 0 3 0a1.5 1.5 0 1 0-3 0M1072.0 504.3a1.5 1.5 0 1 0 3 0a1.5 1.5 0 1 0-3 0M1072.0 474.3a1.5 1.5 0 1 0 3 0a1.5 1.5 0 1 0-3 0M1072.0 444.3a1.5 1.5 0 1 0 3 0a1.5 1.5 0 1 0-3 0M1072.0 414.3a1.5 1.5 0 1 0 3 0a1.5 1.5 0 1 0-3 0M1072.0 384.3a1.5 1.5 0 1 0 3 0a1.5 1.5 0 1 0-3 0M1072.0 354.3a1.5 1.5 0 1 0 3 0a1.5 1.5 0 1 0-3 0M1072.0 324.3a1.5 1.5 0 1 0 3 0a1.5 1.5 0 1 0-3 0M1072.0 294.3a1.5 1.5 0 1 0 3 0a1.5 1.5 0 1 0-3 0M1102.0 894.3a1.5 1.5 0 1 0 3 0a1.5 1.5 0 1 0-3 0M1102.0 864.3a1.5 1.5 0 1 0 3 0a1.5 1.5 0 1 0-3 0M1102.0 834.3a1.5 1.5 0 1 0 3 0a1.5 1.5 0 1 0-3 0M1102.0 804.3a1.5 1.5 0 1 0 3 0a1.5 1.5 0 1 0-3 0M1102.0 774.3a1.5 1.5 0 1 0 3 0a1.5 1.5 0 1 0-3 0M1102.0 744.3a1.5 1.5 0 1 0 3 0a1.5 1.5 0 1 0-3 0M1102.0 714.3a1.5 1.5 0 1 0 3 0a1.5 1.5 0 1 0-3 0M1102.0 684.3a1.5 1.5 0 1 0 3 0a1.5 1.5 0 1 0-3 0M1102.0 654.3a1.5 1.5 0 1 0 3 0a1.5 1.5 0 1 0-3 0M1102.0 624.3a1.5 1.5 0 1 0 3 0a1.5 1.5 0 1 0-3 0M1102.0 594.3a1.5 1.5 0 1 0 3 0a1.5 1.5 0 1 0-3 0M1102.0 564.3a1.5 1.5 0 1 0 3 0a1.5 1.5 0 1 0-3 0M1102.0 534.3a1.5 1.5 0 1 0 3 0a1.5 1.5 0 1 0-3 0M1102.0 504.3a1.5 1.5 0 1 0 3 0a1.5 1.5 0 1 0-3 0M1102.0 474.3a1.5 1.5 0 1 0 3 0a1.5 1.5 0 1 0-3 0M1102.0 444.3a1.5 1.5 0 1 0 3 0a1.5 1.5 0 1 0-3 0M1102.0 414.3a1.5 1.5 0 1 0 3 0a1.5 1.5 0 1 0-3 0M1102.0 384.3a1.5 1.5 0 1 0 3 0a1.5 1.5 0 1 0-3 0M1102.0 354.3a1.5 1.5 0 1 0 3 0a1.5 1.5 0 1 0-3 0M1102.0 324.3a1.5 1.5 0 1 0 3 0a1.5 1.5 0 1 0-3 0M1102.0 294.3a1.5 1.5 0 1 0 3 0a1.5 1.5 0 1 0-3 0M1132.0 894.3a1.5 1.5 0 1 0 3 0a1.5 1.5 0 1 0-3 0M1132.0 864.3a1.5 1.5 0 1 0 3 0a1.5 1.5 0 1 0-3 0M1132.0 834.3a1.5 1.5 0 1 0 3 0a1.5 1.5 0 1 0-3 0M1132.0 804.3a1.5 1.5 0 1 0 3 0a1.5 1.5 0 1 0-3 0M1132.0 774.3a1.5 1.5 0 1 0 3 0a1.5 1.5 0 1 0-3 0M1132.0 744.3a1.5 1.5 0 1 0 3 0a1.5 1.5 0 1 0-3 0M1132.0 714.3a1.5 1.5 0 1 0 3 0a1.5 1.5 0 1 0-3 0M1132.0 684.3a1.5 1.5 0 1 0 3 0a1.5 1.5 0 1 0-3 0M1132.0 654.3a1.5 1.5 0 1 0 3 0a1.5 1.5 0 1 0-3 0M1132.0 624.3a1.5 1.5 0 1 0 3 0a1.5 1.5 0 1 0-3 0M1132.0 594.3a1.5 1.5 0 1 0 3 0a1.5 1.5 0 1 0-3 0M1132.0 564.3a1.5 1.5 0 1 0 3 0a1.5 1.5 0 1 0-3 0M1132.0 534.3a1.5 1.5 0 1 0 3 0a1.5 1.5 0 1 0-3 0M1132.0 504.3a1.5 1.5 0 1 0 3 0a1.5 1.5 0 1 0-3 0M1132.0 474.3a1.5 1.5 0 1 0 3 0a1.5 1.5 0 1 0-3 0M1132.0 444.3a1.5 1.5 0 1 0 3 0a1.5 1.5 0 1 0-3 0M1132.0 414.3a1.5 1.5 0 1 0 3 0a1.5 1.5 0 1 0-3 0M1132.0 384.3a1.5 1.5 0 1 0 3 0a1.5 1.5 0 1 0-3 0M1132.0 354.3a1.5 1.5 0 1 0 3 0a1.5 1.5 0 1 0-3 0M1132.0 324.3a1.5 1.5 0 1 0 3 0a1.5 1.5 0 1 0-3 0M1132.0 294.3a1.5 1.5 0 1 0 3 0a1.5 1.5 0 1 0-3 0M1162.0 894.3a1.5 1.5 0 1 0 3 0a1.5 1.5 0 1 0-3 0M1162.0 864.3a1.5 1.5 0 1 0 3 0a1.5 1.5 0 1 0-3 0M1162.0 834.3a1.5 1.5 0 1 0 3 0a1.5 1.5 0 1 0-3 0M1162.0 804.3a1.5 1.5 0 1 0 3 0a1.5 1.5 0 1 0-3 0M1162.0 774.3a1.5 1.5 0 1 0 3 0a1.5 1.5 0 1 0-3 0M1162.0 744.3a1.5 1.5 0 1 0 3 0a1.5 1.5 0 1 0-3 0M1162.0 714.3a1.5 1.5 0 1 0 3 0a1.5 1.5 0 1 0-3 0M1162.0 684.3a1.5 1.5 0 1 0 3 0a1.5 1.5 0 1 0-3 0M1162.0 654.3a1.5 1.5 0 1 0 3 0a1.5 1.5 0 1 0-3 0M1162.0 624.3a1.5 1.5 0 1 0 3 0a1.5 1.5 0 1 0-3 0M1162.0 594.3a1.5 1.5 0 1 0 3 0a1.5 1.5 0 1 0-3 0M1162.0 564.3a1.5 1.5 0 1 0 3 0a1.5 1.5 0 1 0-3 0M1162.0 534.3a1.5 1.5 0 1 0 3 0a1.5 1.5 0 1 0-3 0M1162.0 504.3a1.5 1.5 0 1 0 3 0a1.5 1.5 0 1 0-3 0M1162.0 474.3a1.5 1.5 0 1 0 3 0a1.5 1.5 0 1 0-3 0M1162.0 444.3a1.5 1.5 0 1 0 3 0a1.5 1.5 0 1 0-3 0M1162.0 414.3a1.5 1.5 0 1 0 3 0a1.5 1.5 0 1 0-3 0M1162.0 384.3a1.5 1.5 0 1 0 3 0a1.5 1.5 0 1 0-3 0M1162.0 354.3a1.5 1.5 0 1 0 3 0a1.5 1.5 0 1 0-3 0M1162.0 324.3a1.5 1.5 0 1 0 3 0a1.5 1.5 0 1 0-3 0M1162.0 294.3a1.5 1.5 0 1 0 3 0a1.5 1.5 0 1 0-3 0" fill="#fff" stroke="#8c8c8c" stroke-width="0.8"/>
<path d="M318.75 358.75 L384.4 358.75" stroke="#505050" stroke-width="2.2" fill="none"/>
<path d="M415.3 358.75 L441.4 358.75" stroke="#505050" stroke-width="2.2" fill="none"/>
<path d="M471.6 358.75 L488.3 358.75 L488.3 326 L560.5 326 L560.5 351.25 L548.75 351.25" stroke="#505050" stroke-width="2.2" fill="none"/>
<path d="M368.3 358.75 L368.3 303.6 L1088.4 303.6 L1088.4 594.3 L917.3 594.3 L917.3 576" stroke="#000" stroke-width="1.3" fill="none"/>
<path d="M327.05 350.55L318.75 358.75L327.05 366.95" stroke="#222" stroke-width="1.2" fill="none"/>
<rect x="384.4" y="352.8" width="30.900000000000034" height="12.5" fill="#fff" stroke="#505050" stroke-width="2.2"/><path d="M394.85 353.8L402.85 364.3M398.85 353.8L406.85 364.3" stroke="#222" stroke-width="1.2"/>
<rect x="441.4" y="352.8" width="30.200000000000045" height="12.5" fill="#fff" stroke="#505050" stroke-width="2.2"/><path d="M451.5 353.8L459.5 364.3M455.5 353.8L463.5 364.3" stroke="#222" stroke-width="1.2"/>
<path d="M428.4 358.75 L428.4 423.3" stroke="#000" stroke-width="1.3" fill="none"/>
<rect x="422.3" y="378.6" width="12.099999999999966" height="29.69999999999999" fill="#fff" stroke="#000" stroke-width="1.5"/><path d="M423.3 396.45000000000005L433.4 387.95000000000005M423.3 399.95000000000005L433.4 391.95000000000005" stroke="#222" stroke-width="1.2"/>
<path d="M419 423.3H437.5" stroke="#000" stroke-width="1.5"/>
<path d="M338.3 358.75 L338.3 447.3" stroke="#000" stroke-width="1.3" fill="none"/>
<path d="M344.2 358.75 L344.2 447.3" stroke="#000" stroke-width="1.3" fill="none"/>
<path d="M318.75 399.4 L356.25 399.4" stroke="#000" stroke-width="1.3" fill="none"/>
<path d="M356.25 393.4V405.6" stroke="#000" stroke-width="1.5"/>
<path d="M327.05 391.2L318.75 399.4L327.05 407.59999999999997" stroke="#222" stroke-width="1.2" fill="none"/>
<path d="M318.75 447.3 L356.6 447.3 L356.6 486.4 L383.6 486.4 L383.6 498" stroke="#000" stroke-width="1.3" fill="none"/>
<path d="M327.05 439.1L318.75 447.3L327.05 455.5" stroke="#222" stroke-width="1.2" fill="none"/>
<path d="M356.6 466.9 L395.3 466.9" stroke="#505050" stroke-width="2.2" fill="none"/>
<path d="M384.4 461.4V473.1" stroke="#505050" stroke-width="2.5"/>
<path d="M395.3 461.4V473.1" stroke="#000" stroke-width="1.4"/>
<path d="M370 510.3 L345.3 510.3 L345.3 480.4 L398.4 480.4 L398.4 632" stroke="#000" stroke-width="1.3" fill="none"/>
<path d="M383.6 522 L383.6 534.1 L356.5 534.1 L356.5 819.3" stroke="#000" stroke-width="1.3" fill="none"/>
<path d="M356.5 552 L398.4 552" stroke="#000" stroke-width="1.3" fill="none"/>
<rect x="362.3" y="544.5" width="30.30000000000001" height="12.700000000000045" fill="#fff" stroke="#505050" stroke-width="2.2"/><path d="M372.45000000000005 545.5L380.45000000000005 556.2M376.45000000000005 545.5L384.45000000000005 556.2" stroke="#222" stroke-width="1.2"/>
<rect x="392.5" y="579.3" width="12.0" height="30.100000000000023" fill="#fff" stroke="#000" stroke-width="1.5"/><path d="M393.5 597.3499999999999L403.5 588.8499999999999M393.5 600.8499999999999L403.5 592.8499999999999" stroke="#222" stroke-width="1.2"/>
<circle cx="374.4" cy="510.2" r="13.5" fill="none" stroke="#333" stroke-width="1.2"/><path d="M369.9 502.2V518.2" stroke="#444" stroke-width="2"/><path d="M369.9 507.2L383.2 500.7M369.9 513.2L383.2 519.7" stroke="#111" stroke-width="1.1"/><path d="M370.9 514.2l5 0.5l-2.5 3z" fill="#111"/>
<path d="M353.3 507.2L359.3 513.2M353.3 513.2L359.3 507.2" stroke="#1c1c78" stroke-width="1.1"/>
<path d="M380.6 489.4L386.6 495.4M380.6 495.4L386.6 489.4" stroke="#1c1c78" stroke-width="1.1"/>
<path d="M380.6 524.8L386.6 530.8M380.6 530.8L386.6 524.8" stroke="#1c1c78" stroke-width="1.1"/>
<path d="M506.25 354.4 L496.1 354.4 L496.1 422 L570.6 422 L570.6 347 L623.4 347" stroke="#505050" stroke-width="2.2" fill="none"/>
<path d="M506.25 387.7 L500.3 387.7 L500.3 417.3 L559 417.3 L559 387.7 L624 387.7" stroke="#000" stroke-width="1.3" fill="none"/>
<path d="M548.75 361.9 L556.1 361.9 L556.1 429.4" stroke="#505050" stroke-width="2.2" fill="none"/>
<path d="M488.1 429.4 L556.1 429.4" stroke="#000" stroke-width="1.6" fill="none"/>
<rect x="506.25" y="339.5" width="42.5" height="59.89999999999998" fill="#fff" stroke="#000" stroke-width="1.4"/><path d="M518.3 339.5V399.4M506.25 363.1H518.3" stroke="#000" stroke-width="1.4"/>
<path d="M509 376h1.3v1.3h-1.3zM509 378h1.3v1.3h-1.3zM509 380h1.3v1.3h-1.3zM511 376h1.3v1.3h-1.3zM511 378h1.3v1.3h-1.3zM511 380h1.3v1.3h-1.3zM513 376h1.3v1.3h-1.3zM513 378h1.3v1.3h-1.3zM513 380h1.3v1.3h-1.3zM515 376h1.3v1.3h-1.3zM515 378h1.3v1.3h-1.3zM515 380h1.3v1.3h-1.3z" fill="#333"/>
<path d="M509 386h1.3v1.3h-1.3zM509 388h1.3v1.3h-1.3zM509 390h1.3v1.3h-1.3zM511 386h1.3v1.3h-1.3zM511 388h1.3v1.3h-1.3zM511 390h1.3v1.3h-1.3zM513 386h1.3v1.3h-1.3zM513 388h1.3v1.3h-1.3zM513 390h1.3v1.3h-1.3zM515 386h1.3v1.3h-1.3zM515 388h1.3v1.3h-1.3zM515 390h1.3v1.3h-1.3z" fill="#333"/>
<path d="M624 387.7 L635.5 387.7" stroke="#505050" stroke-width="1.5" fill="none"/>
<path d="M624 381.4V393.9" stroke="#505050" stroke-width="2.5"/>
<path d="M635.5 381.4V393.9" stroke="#000" stroke-width="1.4"/>
<path d="M590.6 347 L590.6 534 L503.4 534 L503.4 684.2 L533.2 684.2" stroke="#000" stroke-width="1.3" fill="none"/>
<path d="M608.4 387.7 L608.4 633.2 L800.5 633.2" stroke="#000" stroke-width="1.3" fill="none"/>
<path d="M653.4 347 L668.3 347 L668.3 361" stroke="#505050" stroke-width="2.2" fill="none"/>
<path d="M668.3 390 L668.3 461.4" stroke="#000" stroke-width="1.3" fill="none"/>
<rect x="623.4" y="340.8" width="30.0" height="12.5" fill="#fff" stroke="#505050" stroke-width="2.2"/><path d="M633.4 341.8L641.4 352.3M637.4 341.8L645.4 352.3" stroke="#222" stroke-width="1.2"/>
<rect x="660.8" y="360.6" width="15.600000000000023" height="29.399999999999977" fill="#fff" stroke="#505050" stroke-width="2.2"/><path d="M661.8 378.3L675.4 369.8M661.8 381.8L675.4 373.8" stroke="#222" stroke-width="1.2"/>
<rect x="662.5" y="406.4" width="12.0" height="30.5" fill="#fff" stroke="#000" stroke-width="1.5"/><path d="M663.5 424.65L673.5 416.15M663.5 428.15L673.5 420.15" stroke="#222" stroke-width="1.2"/>
<path d="M659 461.4H677.7" stroke="#000" stroke-width="1.5"/>
<path d="M676.4 369.4 L694.4 369.4" stroke="#000" stroke-width="1.3" fill="none"/>
<path d="M686.6 369.4 L686.6 355.6 L698.3 355.6" stroke="#505050" stroke-width="1.8" fill="none"/>
<rect x="698.3" y="349.7" width="30.0" height="12.5" fill="#fff" stroke="#505050" stroke-width="2.2"/><path d="M708.3 350.7L716.3 361.2M712.3 350.7L720.3 361.2" stroke="#222" stroke-width="1.2"/>
<path d="M728.3 354 L740.5 354 L740.5 333.4 L800.6 333.4 L800.6 357.2 L793 357.2" stroke="#000" stroke-width="1.3" fill="none"/>
<path d="M750.6 363.4 L746.4 363.4 L746.4 336.4 L874.4 336.4" stroke="#000" stroke-width="1.3" fill="none"/>
<path d="M814.5 333.4L820.5 339.4M814.5 339.4L820.5 333.4" stroke="#1c1c78" stroke-width="1.1"/>
<path d="M827.5 332.4L835.5 336.4L827.5 340.4z" fill="#fff" stroke="#333" stroke-width="1.3"/><path d="M835.5 331.9V340.9" stroke="#333" stroke-width="1.5"/>
<path d="M842.6 333.4L848.6 339.4M842.6 339.4L848.6 333.4" stroke="#1c1c78" stroke-width="1.1"/>
<rect x="750.6" y="346.7" width="42.5" height="60.19999999999999" fill="#fff" stroke="#505050" stroke-width="2.2"/><path d="M762.8 346.7V406.9M750.6 370.8H762.8" stroke="#505050" stroke-width="2.2"/>
<path d="M754 383h1.3v1.3h-1.3zM754 385h1.3v1.3h-1.3zM754 387h1.3v1.3h-1.3zM756 383h1.3v1.3h-1.3zM756 385h1.3v1.3h-1.3zM756 387h1.3v1.3h-1.3zM758 383h1.3v1.3h-1.3zM758 385h1.3v1.3h-1.3zM758 387h1.3v1.3h-1.3zM760 383h1.3v1.3h-1.3zM760 385h1.3v1.3h-1.3zM760 387h1.3v1.3h-1.3z" fill="#333"/>
<path d="M754 394h1.3v1.3h-1.3zM754 396h1.3v1.3h-1.3zM754 398h1.3v1.3h-1.3zM756 394h1.3v1.3h-1.3zM756 396h1.3v1.3h-1.3zM756 398h1.3v1.3h-1.3zM758 394h1.3v1.3h-1.3zM758 396h1.3v1.3h-1.3zM758 398h1.3v1.3h-1.3zM760 394h1.3v1.3h-1.3zM760 396h1.3v1.3h-1.3zM760 398h1.3v1.3h-1.3z" fill="#333"/>
<path d="M750.6 390 L746.4 390 L746.4 478.6" stroke="#000" stroke-width="1.3" fill="none"/>
<path d="M746.4 478.6 L998.6 478.6" stroke="#505050" stroke-width="2.2" fill="none"/>
<path d="M998.6 478.6 L998.6 819.3" stroke="#000" stroke-width="1.3" fill="none"/>
<path d="M793.1 387.7 L800.6 387.7 L800.6 417.3 L1034.5 417.3" stroke="#000" stroke-width="1.3" fill="none"/>
<rect x="806.6" y="411.6" width="30.0" height="12.0" fill="#fff" stroke="#000" stroke-width="1.6"/><path d="M816.6 412.6L824.6 422.6M820.6 412.6L828.6 422.6" stroke="#222" stroke-width="1.2"/>
<rect x="878.3" y="411.3" width="30.0" height="12.300000000000011" fill="#fff" stroke="#000" stroke-width="1.6"/><path d="M888.3 412.3L896.3 422.6M892.3 412.3L900.3 422.6" stroke="#222" stroke-width="1.2"/>
<path d="M856.1 417.3 L856.1 478.6" stroke="#000" stroke-width="1.3" fill="none"/>
<rect x="849.8" y="433.75" width="12.400000000000091" height="29.25" fill="#fff" stroke="#505050" stroke-width="2.2"/><path d="M850.8 451.375L861.2 442.875M850.8 454.875L861.2 446.875" stroke="#222" stroke-width="1.2"/>
<rect x="874.4" y="330.3" width="30.100000000000023" height="12.399999999999977" fill="#fff" stroke="#000" stroke-width="1.6"/><path d="M884.45 331.3L892.45 341.7M888.45 331.3L896.45 341.7" stroke="#222" stroke-width="1.2"/>
<path d="M904.5 339.7 L1021 339.7" stroke="#000" stroke-width="1.3" fill="none"/>
<path d="M1004.2 336.7L1010.2 342.7M1004.2 342.7L1010.2 336.7" stroke="#1c1c78" stroke-width="1.1"/>
<path d="M1034.5 303.6 L1034.5 330" stroke="#000" stroke-width="1.3" fill="none"/>
<path d="M1034.5 349.5 L1034.5 484.7" stroke="#000" stroke-width="1.3" fill="none"/>
<circle cx="1025.6" cy="339.7" r="13.5" fill="none" stroke="#333" stroke-width="1.2"/><path d="M1021.0999999999999 331.7V347.7" stroke="#444" stroke-width="2"/><path d="M1021.0999999999999 336.7L1034.3999999999999 330.2M1021.0999999999999 342.7L1034.3999999999999 349.2" stroke="#111" stroke-width="1.1"/><path d="M1034.3999999999999 349.2l-5 -0.5l2 -3.5z" fill="#111"/>
<path d="M1031.5 318.25L1037.5 324.25M1031.5 324.25L1037.5 318.25" stroke="#1c1c78" stroke-width="1.1"/>
<path d="M1031.5 354.5L1037.5 360.5M1031.5 360.5L1037.5 354.5" stroke="#1c1c78" stroke-width="1.1"/>
<rect x="1028.4" y="429.4" width="12.199999999999818" height="30.100000000000023" fill="#fff" stroke="#000" stroke-width="1.5"/><path d="M1029.4 447.45L1039.6 438.95M1029.4 450.95L1039.6 442.95" stroke="#222" stroke-width="1.2"/>
<path d="M1025.3 484.7H1043.8" stroke="#505050" stroke-width="2.5"/>
<rect x="1082.5" y="399.5" width="11.799999999999955" height="29.899999999999977" fill="#fff" stroke="#000" stroke-width="1.5"/><path d="M1083.5 417.45L1093.3 408.95M1083.5 420.95L1093.3 412.95" stroke="#222" stroke-width="1.2"/>
<path d="M488.6 429.4 L488.6 729.4 L356.5 729.4" stroke="#000" stroke-width="1.3" fill="none"/>
<rect x="383.2" y="723.2" width="30.400000000000034" height="12.0" fill="#fff" stroke="#000" stroke-width="1.5"/><path d="M393.4 724.2L401.4 734.2M397.4 724.2L405.4 734.2" stroke="#222" stroke-width="1.2"/>
<rect x="482.3" y="466.6" width="12.5" height="30.399999999999977" fill="#fff" stroke="#505050" stroke-width="2.2"/><path d="M483.3 484.8L493.8 476.3M483.3 488.3L493.8 480.3" stroke="#222" stroke-width="1.2"/>
<path d="M488.6 452 L590.6 452" stroke="#505050" stroke-width="2.2" fill="none"/>
<path d="M526.4 446.6V458.3" stroke="#505050" stroke-width="2.5"/>
<path d="M494.8 505.9 L586.25 505.9" stroke="#505050" stroke-width="2.2" fill="none"/>
<path d="M586.25 497.3V514.5" stroke="#505050" stroke-width="2.5"/>
<circle cx="510.9" cy="505.9" r="13.6" fill="none" stroke="#222" stroke-width="1.2"/><path d="M507.9 501.9L513.9 505.9L507.9 509.9z" fill="#111"/><path d="M513.9 501.9V509.9" stroke="#111" stroke-width="1.5"/><path d="M515.9 494.9L522.9 487.9M521.9 502.9L528.9 495.9" stroke="#222" stroke-width="1"/><path d="M523.9 486.9l-4 1l3 3zM529.9 494.9l-4 1l3 3z" fill="#222"/>
<circle cx="551.6" cy="505.9" r="13.6" fill="none" stroke="#222" stroke-width="1.2"/><path d="M548.6 501.9L554.6 505.9L548.6 509.9z" fill="#111"/><path d="M554.6 501.9V509.9" stroke="#111" stroke-width="1.5"/><path d="M556.6 494.9L563.6 487.9M562.6 502.9L569.6 495.9" stroke="#222" stroke-width="1"/><path d="M564.6 486.9l-4 1l3 3zM570.6 494.9l-4 1l3 3z" fill="#222"/>
<path d="M490.3 502.9L496.3 508.9M490.3 508.9L496.3 502.9" stroke="#1c1c78" stroke-width="1.1"/>
<path d="M526.2 502.9L532.2 508.9M526.2 508.9L532.2 502.9" stroke="#1c1c78" stroke-width="1.1"/>
<path d="M530.1 502.9L536.1 508.9M530.1 508.9L536.1 502.9" stroke="#1c1c78" stroke-width="1.1"/>
<path d="M566.4 502.9L572.4 508.9M566.4 508.9L572.4 502.9" stroke="#1c1c78" stroke-width="1.1"/>
<path d="M384.6 642.6 L364.1 642.6 L364.1 667.7" stroke="#505050" stroke-width="1.8" fill="none"/>
<path d="M364.1 667.7 L893.6 667.7" stroke="#505050" stroke-width="2.2" fill="none"/>
<circle cx="389.7" cy="642.6" r="13.5" fill="none" stroke="#333" stroke-width="1.2"/><path d="M385.2 634.6V650.6" stroke="#444" stroke-width="2"/><path d="M385.2 639.6L398.5 633.1M385.2 645.6L398.5 652.1" stroke="#111" stroke-width="1.1"/><path d="M398.5 652.1l-5 -0.5l2 -3.5z" fill="#111"/>
<path d="M368.3 639.6L374.3 645.6M368.3 645.6L374.3 639.6" stroke="#1c1c78" stroke-width="1.1"/>
<path d="M395.1 621.1L401.1 627.1M395.1 627.1L401.1 621.1" stroke="#1c1c78" stroke-width="1.1"/>
<path d="M395.1 657.2L401.1 663.2M395.1 663.2L401.1 657.2" stroke="#1c1c78" stroke-width="1.1"/>
<path d="M398.1 652 L398.1 675.4" stroke="#000" stroke-width="1.3" fill="none"/>
<path d="M389 675.4H407.7" stroke="#000" stroke-width="1.5"/>
<path d="M440.5 667.7 L440.5 717.4" stroke="#000" stroke-width="1.3" fill="none"/>
<rect x="434.3" y="672.2" width="12.0" height="30.0" fill="#fff" stroke="#000" stroke-width="1.5"/><path d="M435.3 690.2L445.3 681.7M435.3 693.7L445.3 685.7" stroke="#222" stroke-width="1.2"/>
<path d="M431.4 717.4H450" stroke="#000" stroke-width="1.5"/>
<path d="M515.1 664.7L521.1 670.7M515.1 670.7L521.1 664.7" stroke="#1c1c78" stroke-width="1.1"/>
<path d="M534.5 663.7L545.3 667.7L534.5 671.7z" fill="#fff" stroke="#333" stroke-width="1.3"/><path d="M545.3 663.2V672.2" stroke="#333" stroke-width="1.5"/>
<path d="M559.5 664.7L565.5 670.7M559.5 670.7L565.5 664.7" stroke="#1c1c78" stroke-width="1.1"/>
<rect x="576.6" y="661.8" width="31.100000000000023" height="12.0" fill="#fff" stroke="#505050" stroke-width="2.4"/><path d="M587.1500000000001 662.8L595.1500000000001 672.8M591.1500000000001 662.8L599.1500000000001 672.8" stroke="#222" stroke-width="1.2"/>
<path d="M614.4 667.7 L614.4 678.2 L593.4 678.2 L593.4 693.6 L620.5 693.6" stroke="#000" stroke-width="1.3" fill="none"/>
<rect x="533.2" y="678.1" width="30.09999999999991" height="12.199999999999932" fill="#fff" stroke="#000" stroke-width="1.5"/><path d="M543.25 679.1L551.25 689.3M547.25 679.1L555.25 689.3" stroke="#222" stroke-width="1.2"/>
<path d="M563.3 684.5 L587.5 684.5 L587.5 753.4 L668.5 753.4 L668.5 702.3 L662.6 702.3" stroke="#000" stroke-width="1.3" fill="none"/>
<path d="M488.5 714.2 L533.4 714.2" stroke="#000" stroke-width="1.3" fill="none"/>
<rect x="533.4" y="708.6" width="30.0" height="11.699999999999932" fill="#fff" stroke="#000" stroke-width="1.5"/><path d="M543.4 709.6L551.4 719.3M547.4 709.6L555.4 719.3" stroke="#222" stroke-width="1.2"/>
<path d="M563.4 714.2 L578.3 714.2 L578.3 759.4 L673.2 759.4 L673.2 690.3 L662.6 690.3" stroke="#000" stroke-width="1.3" fill="none"/>
<rect x="620.5" y="687.3" width="42.10000000000002" height="60.10000000000002" fill="#fff" stroke="#000" stroke-width="1.5"/><path d="M632.4 687.3V747.4M620.5 711.3H632.4" stroke="#000" stroke-width="1.5"/>
<path d="M623 724h1.3v1.3h-1.3zM623 726h1.3v1.3h-1.3zM623 728h1.3v1.3h-1.3zM625 724h1.3v1.3h-1.3zM625 726h1.3v1.3h-1.3zM625 728h1.3v1.3h-1.3zM627 724h1.3v1.3h-1.3zM627 726h1.3v1.3h-1.3zM627 728h1.3v1.3h-1.3zM629 724h1.3v1.3h-1.3zM629 726h1.3v1.3h-1.3zM629 728h1.3v1.3h-1.3z" fill="#333"/>
<path d="M623 734h1.3v1.3h-1.3zM623 736h1.3v1.3h-1.3zM623 738h1.3v1.3h-1.3zM625 734h1.3v1.3h-1.3zM625 736h1.3v1.3h-1.3zM625 738h1.3v1.3h-1.3zM627 734h1.3v1.3h-1.3zM627 736h1.3v1.3h-1.3zM627 738h1.3v1.3h-1.3zM629 734h1.3v1.3h-1.3zM629 736h1.3v1.3h-1.3zM629 738h1.3v1.3h-1.3z" fill="#333"/>
<path d="M604.4 711.3V729.3" stroke="#000" stroke-width="1.5"/>
<path d="M604.4 720.2 L620.5 720.2" stroke="#000" stroke-width="1.3" fill="none"/>
<path d="M620.5 732.3 L605.5 732.3 L605.5 774.4 L683.3 774.4 L683.3 729.4 L786.6 729.4" stroke="#000" stroke-width="1.3" fill="none"/>
<path d="M616 774.4 L616 819.3" stroke="#505050" stroke-width="2.2" fill="none"/>
<rect x="698.5" y="723.4" width="30.100000000000023" height="12.0" fill="#fff" stroke="#000" stroke-width="1.5"/><path d="M708.55 724.4L716.55 734.4M712.55 724.4L720.55 734.4" stroke="#222" stroke-width="1.2"/>
<path d="M770.3 726.4L776.3 732.4M770.3 732.4L776.3 726.4" stroke="#1c1c78" stroke-width="1.1"/>
<path d="M758.2 667.7 L758.2 879.2" stroke="#000" stroke-width="1.3" fill="none"/>
<rect x="752.5" y="676.6" width="12.100000000000023" height="30.799999999999955" fill="#fff" stroke="#000" stroke-width="1.6"/><path d="M753.5 695.0L763.6 686.5M753.5 698.5L763.6 690.5" stroke="#222" stroke-width="1.2"/>
<path d="M800.5 719.5 L800.5 564.3 L825.7 564.3" stroke="#000" stroke-width="1.3" fill="none"/>
<path d="M800.5 739.5 L800.5 819.3" stroke="#000" stroke-width="1.3" fill="none"/>
<circle cx="791.6" cy="729.4" r="13.5" fill="none" stroke="#333" stroke-width="1.2"/><path d="M787.1 721.4V737.4" stroke="#444" stroke-width="2"/><path d="M787.1 726.4L800.4 719.9M787.1 732.4L800.4 738.9" stroke="#111" stroke-width="1.1"/><path d="M788.1 733.4l5 0.5l-2.5 3z" fill="#111"/>
<path d="M797.5 708.4L803.5 714.4M797.5 714.4L803.5 708.4" stroke="#1c1c78" stroke-width="1.1"/>
<path d="M797.5 744.3L803.5 750.3M797.5 750.3L803.5 744.3" stroke="#1c1c78" stroke-width="1.1"/>
<rect x="825.7" y="558.3" width="30.5" height="12.0" fill="#fff" stroke="#505050" stroke-width="2.2"/><path d="M835.95 559.3L843.95 569.3M839.95 559.3L847.95 569.3" stroke="#222" stroke-width="1.2"/>
<path d="M856.2 564.3 L904.4 564.3" stroke="#000" stroke-width="1.3" fill="none"/>
<path d="M887.2 561.3L893.2 567.3M887.2 567.3L893.2 561.3" stroke="#1c1c78" stroke-width="1.1"/>
<path d="M917.3 555 L917.3 530.8" stroke="#000" stroke-width="1.3" fill="none"/>
<path d="M908.3 530.8H926.3" stroke="#505050" stroke-width="2.5"/>
<circle cx="908.9" cy="564.3" r="13.5" fill="none" stroke="#333" stroke-width="1.2"/><path d="M904.4 556.3V572.3" stroke="#444" stroke-width="2"/><path d="M904.4 561.3L917.6999999999999 554.8M904.4 567.3L917.6999999999999 573.8" stroke="#111" stroke-width="1.1"/><path d="M917.6999999999999 573.8l-5 -0.5l2 -3.5z" fill="#111"/>
<path d="M914.3 543.7L920.3 549.7M914.3 549.7L920.3 543.7" stroke="#1c1c78" stroke-width="1.1"/>
<path d="M914.3 579.3L920.3 585.3M914.3 585.3L920.3 579.3" stroke="#1c1c78" stroke-width="1.1"/>
<path d="M870 564.3l7-6v12z M908.3 527l-6 6h12z M908.3 600l-6-6h12z" fill="#9cc8f4" opacity="0.9"/>
<path d="M893.6 667.7 L893.6 797.1" stroke="#000" stroke-width="1.3" fill="none"/>
<rect x="887.7" y="684.3" width="11.899999999999977" height="30.0" fill="#fff" stroke="#000" stroke-width="1.5"/><path d="M888.7 702.3L898.6 693.8M888.7 705.8L898.6 697.8" stroke="#222" stroke-width="1.2"/>
<rect x="887.7" y="767.1" width="11.899999999999977" height="30.0" fill="#fff" stroke="#505050" stroke-width="2.0"/><path d="M888.7 785.1L898.6 776.6M888.7 788.6L898.6 780.6" stroke="#222" stroke-width="1.2"/>
<path d="M893.6 741.6 L934 741.6" stroke="#000" stroke-width="1.3" fill="none"/>
<path d="M917.4 738.6L923.4 744.6M917.4 744.6L923.4 738.6" stroke="#1c1c78" stroke-width="1.1"/>
<path d="M947.2 731.6 L947.2 669.4 L1118.4 669.4 L1118.4 712" stroke="#000" stroke-width="1.3" fill="none"/>
<rect x="1073.3" y="663.4" width="30.200000000000045" height="11.800000000000068" fill="#fff" stroke="#000" stroke-width="1.5"/><path d="M1083.4 664.4L1091.4 674.2M1087.4 664.4L1095.4 674.2" stroke="#222" stroke-width="1.2"/>
<path d="M947.2 751.6 L947.2 819.3" stroke="#000" stroke-width="1.3" fill="none"/>
<circle cx="938.6" cy="741.6" r="13.5" fill="none" stroke="#333" stroke-width="1.2"/><path d="M934.1 733.6V749.6" stroke="#444" stroke-width="2"/><path d="M934.1 738.6L947.4 732.1M934.1 744.6L947.4 751.1" stroke="#111" stroke-width="1.1"/><path d="M935.1 745.6l5 0.5l-2.5 3z" fill="#111"/>
<path d="M944.2 720.4L950.2 726.4M944.2 726.4L950.2 720.4" stroke="#1c1c78" stroke-width="1.1"/>
<path d="M944.2 756.9L950.2 762.9M944.2 762.9L950.2 756.9" stroke="#1c1c78" stroke-width="1.1"/>
<circle cx="1118.4" cy="726" r="13.6" fill="none" stroke="#222" stroke-width="1.2"/><path d="M1118.4 712V740" stroke="#222" stroke-width="1"/><path d="M1114.9 723L1121.9 723L1118.4 729z" fill="#fff" stroke="#111"/><path d="M1114.9 729H1121.9" stroke="#111" stroke-width="1.5"/><path d="M1129.4 732L1136.4 739M1123.4 737L1130.4 744" stroke="#222" stroke-width="1"/><path d="M1137.4 740l-1 -4l-3 3zM1131.4 745l-1 -4l-3 3z" fill="#222"/>
<path d="M1115.4 704.2L1121.4 710.2M1115.4 710.2L1121.4 704.2" stroke="#1c1c78" stroke-width="1.1"/>
<path d="M1115.4 742.5L1121.4 748.5M1115.4 748.5L1121.4 742.5" stroke="#1c1c78" stroke-width="1.1"/>
<path d="M1118.4 740 L1118.4 772.4" stroke="#000" stroke-width="1.3" fill="none"/>
<path d="M1109.3 772.4H1127.5" stroke="#000" stroke-width="1.5"/>
<path d="M314.6 819.3 L998.6 819.3" stroke="#000" stroke-width="1.3" fill="none"/>
<path d="M332.7 819.3 L332.7 870.3" stroke="#000" stroke-width="1.3" fill="none"/>
<path d="M338.4 819.3 L338.4 870.3" stroke="#000" stroke-width="1.3" fill="none"/>
<path d="M307.3 811.9L314.6 819.3L307.3 826.6999999999999" stroke="#222" stroke-width="1.2" fill="none"/>
<path d="M307.3 862.9L314.6 870.3L307.3 877.6999999999999" stroke="#222" stroke-width="1.2" fill="none"/>
<path d="M314.6 870.3 L357.3 870.3" stroke="#000" stroke-width="1.3" fill="none"/>
<path d="M357.3 861.5V879.4" stroke="#000" stroke-width="1.5"/>
<path d="M458.3 819.3 L458.3 870.3" stroke="#000" stroke-width="1.3" fill="none"/>
<path d="M449.3 842H467.8" stroke="#505050" stroke-width="2.5"/>
<path d="M449.3 870.3H467.8" stroke="#000" stroke-width="1.4"/>
<path d="M586 819.3 L586 879.2" stroke="#505050" stroke-width="1.8" fill="none"/>
<path d="M586 879.2 L624 879.2" stroke="#000" stroke-width="1.3" fill="none"/>
<path d="M624 879.2L631 871.2" stroke="#333" stroke-width="1.2"/><path d="M627 874.2V861.2M629 872.2V861.2" stroke="#333" stroke-width="1"/><path d="M622 861.2H634" stroke="#222" stroke-width="1.3"/>
<path d="M630 879.2 L849 879.2" stroke="#000" stroke-width="1.3" fill="none"/>
<rect x="788.1" y="873.2" width="30.299999999999955" height="12.199999999999932" fill="#fff" stroke="#000" stroke-width="1.5"/><path d="M798.25 874.2L806.25 884.4M802.25 874.2L810.25 884.4" stroke="#222" stroke-width="1.2"/>
<path d="M849 879.2L856 871.2" stroke="#333" stroke-width="1.2"/><path d="M852 874.2V861.2M854 872.2V861.2" stroke="#333" stroke-width="1"/><path d="M847 861.2H859" stroke="#222" stroke-width="1.3"/>
<path d="M855 879.2 L887.1 879.2" stroke="#000" stroke-width="1.3" fill="none"/>
<path d="M887.1 870.6V888.8" stroke="#000" stroke-width="1.5"/>
</svg><div id="vscroll" class="a">
 <div class="a" style="left:4px;top:7px;width:0;height:0;border-left:5px solid transparent;border-right:5px solid transparent;border-bottom:5px solid #8a8f98"></div>
 <div class="a" style="left:1px;top:192px;width:17px;height:364px;border:1px solid #b8c0c8;background:linear-gradient(90deg,#f8fafc,#eef2f6)"></div>
 <div class="a" style="left:4px;top:760px;width:0;height:0;border-left:5px solid transparent;border-right:5px solid transparent;border-top:5px solid #8a8f98"></div>
</div>
<div id="tabbar" class="a">
 <div class="a" style="left:0;top:0;width:1280px;height:1px;background:#fff"></div>
 <svg class="a" style="left:0;top:0" width="1280" height="18" viewBox="0 0 1280 18">
  <defs><linearGradient id="tg" x1="0" y1="0" x2="0" y2="1"><stop offset="0" stop-color="#ebebf6"/><stop offset="1" stop-color="#cfcfdc"/></linearGradient></defs>
  <rect x="68" y="1" width="558" height="16" fill="url(#tg)"/>
  <path d="M8 4v10M14 4l-5 5 5 5z" fill="#000" stroke="#000" stroke-width="1.2"/>
  <path d="M30 4l-5 5 5 5z" fill="#000"/>
  <path d="M42 4l5 5-5 5z" fill="#000"/>
  <path d="M58 4l5 5-5 5zM64 4v10" fill="#000" stroke="#000" stroke-width="1.2"/>
  <path d="M71 17V2h71l-11 15z" fill="#fff" stroke="#9a9aa8"/>
  <rect x="625" y="1" width="6" height="16" fill="#fff" stroke="#666" stroke-width="0.8"/>
  <path d="M641 4l-5 5 5 5z" fill="#8a8a8a"/>
  <rect x="780.5" y="1.5" width="290" height="14" fill="#eef2f7" stroke="#a8bccc"/>
  <path d="M922.5 5v7M924.5 5v7M926.5 5v7" stroke="#555"/>
  <path d="M1250 4l5 5-5 5z" fill="#8a8a8a"/>
 </svg>
 <div class="a" style="left:77px;top:2px;font-size:12px;font-weight:bold">Page-1</div>
</div>
<div id="status" class="a">
 <div class="a" style="left:0;top:0;width:1280px;height:1px;background:#fff"></div>
 <div class="a sbox" style="left:3px;width:150px"></div>
 <div class="a sbox" style="left:158px;width:150px"></div>
 <div class="a sbox" style="left:313px;width:150px"></div>
 <div class="a sbox" style="left:468px;width:150px"></div>
 <div class="a sbox" style="left:1159px;width:100px;font-size:11px;text-align:center;line-height:15px">Page 1/1</div>
 <div class="a" style="left:0;top:24px;width:1280px;height:4px;background:linear-gradient(#2f6a84 0,#2f6a84 1px,#7cc0d8 1px,#5aa6c2)"></div>
 <div class="a" style="left:20px;top:25px;width:22px;height:6px;border-radius:11px 11px 0 0;background:#f4f8fa"></div>
 <div class="a" style="left:220px;top:25px;width:125px;height:3px;border:1px solid #3a6a80;border-bottom:none;background:#8ac6dc"></div>
 <div class="a" style="left:348px;top:25px;width:125px;height:3px;border:1px solid #3a6a80;border-bottom:none;background:#8ac6dc"></div>
 <div class="a" style="left:476px;top:25px;width:125px;height:3px;border:1px solid #3a6a80;border-bottom:none;background:#8ac6dc"></div>
 <div class="a" style="left:604px;top:25px;width:170px;height:3px;border:1px solid #3a6a80;border-bottom:none;background:#8ac6dc"></div>
</div>
<div class="a" style="left:1239px;top:802px;width:23px;height:150px;background:#f8f8f6;border:1px solid #000">
 <div class="a" style="left:1px;top:5px;width:140px;height:20px;transform-origin:0 0;transform:translate(20px,0) rotate(90deg);font-size:13.5px;line-height:20px;white-space:nowrap;-webkit-text-stroke:0.25px #000">Shape Data - The...</div>
 <svg class="a" style="left:6px;top:131px" width="10" height="10" viewBox="0 0 10 10"><path d="M1 1L9 9M9 1L1 9" stroke="#000" stroke-width="1.6"/></svg>
</div>

</body></html>
